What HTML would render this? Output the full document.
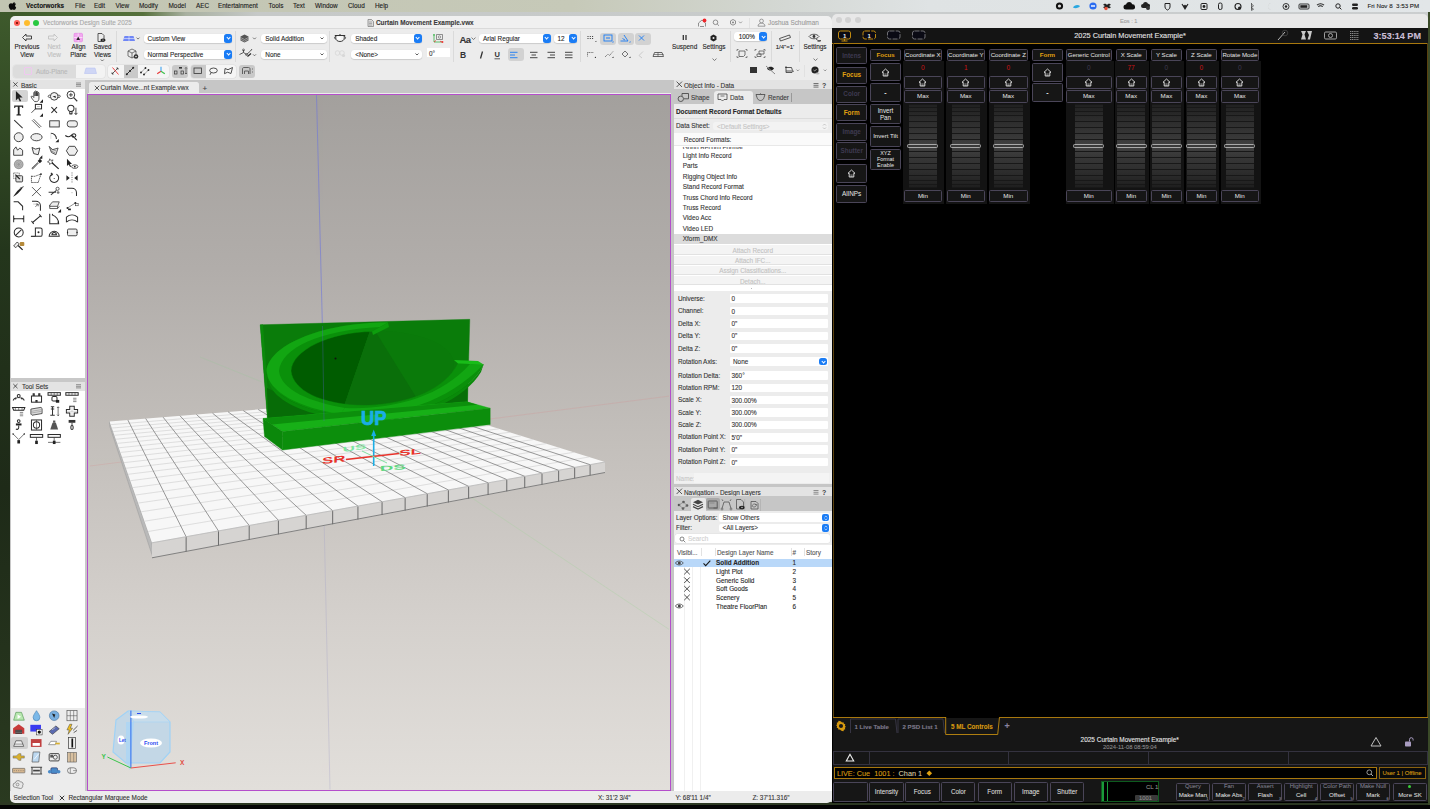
<!DOCTYPE html>
<html><head><meta charset="utf-8">
<style>
*{margin:0;padding:0;box-sizing:border-box}
html,body{width:1430px;height:809px;overflow:hidden;background:#000}
body{position:relative;font-family:"Liberation Sans",sans-serif;font-size:6.4px;color:#262626;line-height:1}
.a{position:absolute}
.t{position:absolute;white-space:nowrap;line-height:1;-webkit-text-stroke:.1px currentColor;margin-top:.8px}
svg{position:absolute;overflow:visible}
/* dropdowns */
.dd{position:absolute;background:#fff;border-radius:3px;box-shadow:0 0.5px 1px rgba(0,0,0,.25);height:9px}
.dd .t{left:4px;top:1.0px;font-size:6.4px;color:#262626}
.bb{position:absolute;right:0;top:0;width:8px;height:9px;background:#1a7cf5;border-radius:2.5px}
.bb:after{content:"";position:absolute;left:2.6px;top:2.2px;width:2.2px;height:2.2px;border-right:1px solid #fff;border-bottom:1px solid #fff;transform:rotate(45deg)}
.chev{position:absolute;width:2.4px;height:2.4px;border-right:1px solid #333;border-bottom:1px solid #333;transform:rotate(45deg)}
.sep{position:absolute;width:1px;background:#dadada}
.hl{position:absolute;background:#d2d2d2;border-radius:3px}
/* panels */
.ph{position:absolute;background:#e3e3e3}
/* eos */
.eb{position:absolute;border:1px solid #4a4558;background:#161616;border-radius:1px;color:#e6e6e6;font-size:6.2px;text-align:center}
.eb span{position:absolute;left:0;right:0;top:50%;transform:translateY(-50%)}
</style></head><body>

<!-- wallpaper -->
<div class="a" style="left:0;top:0;width:1430px;height:809px;background:linear-gradient(90deg,#3a5428 0%,#4a6a34 6%,#56703c 10%,#a8b0a0 13%,#c6c9c8 18%,#cbcecf 100%)"></div>
<div class="a" style="left:0;top:12px;width:11px;height:795px;background:linear-gradient(180deg,#3e5a2c,#24361c 30%,#1e2a18 60%,#2a3a20 100%)"></div>
<div class="a" style="left:0;top:802px;width:1430px;height:3px;background:#2c3822"></div>
<div class="a" style="left:1428px;top:12px;width:2px;height:795px;background:#3a4a28"></div>
<div class="a" style="left:0;top:805px;width:1430px;height:4px;background:#050505"></div>
<!-- menubar -->
<div class="a" style="left:0;top:0;width:1430px;height:12px;background:linear-gradient(90deg,#c2c5b2 0%,#c6c9b8 40%,#d4d8d4 55%,#dfe3e4 65%,#e2e6e8 100%)"></div>
<!-- VW window -->
<div class="a" id="vw" style="left:10px;top:25px;width:821.5px;height:770px;background:#ececec"></div>
<!-- EOS window -->
<div class="a" id="eos" style="left:832px;top:27px;width:596px;height:776px;background:#000"></div>

<div id="menu">
<svg style="left:9px;top:1.5px" width="8" height="9" viewBox="0 0 16 18"><path d="M11.5 0c.2 1.3-.4 2.6-1.1 3.4-.8.9-2 1.5-3.1 1.4-.2-1.2.4-2.5 1.1-3.3C9.2.6 10.5 0 11.5 0zM15.2 13.2c-.5 1.1-.7 1.6-1.3 2.5-.9 1.3-2.1 2.9-3.6 2.9-1.3 0-1.7-.9-3.5-.8-1.8 0-2.2.8-3.5.8C1.8 18.6.7 17.1-.2 15.8c-2.5-3.7-2.8-8.1-1.2-10.4C-.3 3.8 1.4 2.8 3 2.8c1.6 0 2.7.9 4 .9 1.3 0 2.1-.9 4-.9 1.4 0 2.9.8 4 2.1-3.5 1.9-2.9 6.9.2 8.3z" fill="#0a0a0a" transform="translate(1.5,0) scale(0.85)"/></svg>
<div class="t" style="left:26px;top:2.6px;font-weight:bold;color:#111">Vectorworks</div>
<div class="t" style="left:75px;top:2.6px;color:#1a1a1a">File</div>
<div class="t" style="left:94px;top:2.6px;color:#1a1a1a">Edit</div>
<div class="t" style="left:115.5px;top:2.6px;color:#1a1a1a">View</div>
<div class="t" style="left:139px;top:2.6px;color:#1a1a1a">Modify</div>
<div class="t" style="left:168.5px;top:2.6px;color:#1a1a1a">Model</div>
<div class="t" style="left:196px;top:2.6px;color:#1a1a1a">AEC</div>
<div class="t" style="left:218px;top:2.6px;color:#1a1a1a">Entertainment</div>
<div class="t" style="left:268.5px;top:2.6px;color:#1a1a1a">Tools</div>
<div class="t" style="left:293px;top:2.6px;color:#1a1a1a">Text</div>
<div class="t" style="left:315px;top:2.6px;color:#1a1a1a">Window</div>
<div class="t" style="left:348px;top:2.6px;color:#1a1a1a">Cloud</div>
<div class="t" style="left:375px;top:2.6px;color:#1a1a1a">Help</div>
<!-- status icons -->
<svg style="left:1055px;top:2px" width="375" height="9">
 <circle cx="4.5" cy="4" r="3.6" fill="#111"/><circle cx="4.5" cy="4" r="1.6" fill="#ddd"/>
 <path d="M18 5.5c1-2.5 5-3.5 7-1.5-1 2-5 3-7 1.5z" fill="#2aa8e0"/>
 <circle cx="38" cy="4" r="3.6" fill="#2a6cf0"/><rect x="36" y="3.3" width="4" height="1.4" fill="#fff"/>
 <path d="M50 1.5l2 1.2 2-1.2 2 1.2-2 1.3 2 1.3-2 1.2-2-1.2-2 1.2-2-1.2 2-1.3-2-1.3z" fill="#222"/><circle cx="51" cy="6.5" r="1.7" fill="#e8503a"/>
 <path d="M76 7.5h-5a2.5 2.5 0 010-5 3.2 3.2 0 016.2-.3 2.5 2.5 0 01.4 5.3z" fill="#111"/>
 <path d="M92 6h-4a2 2 0 010-4 2.6 2.6 0 015-.2 1.9 1.9 0 01.3 3.8z" fill="#222"/><circle cx="93" cy="6" r="2" fill="#333"/>
 <path d="M110 1.5h5v3.5c0 2-2.5 3-2.5 3s-2.5-1-2.5-3z" fill="none" stroke="#222" stroke-width="1"/>
 <path d="M127 2l3 5 3-5M129 3l1 2 1-2" fill="none" stroke="#222" stroke-width="1.1"/>
 <rect x="146" y="1.5" width="6" height="6" rx="1" fill="none" stroke="#222" stroke-width="1"/><circle cx="149" cy="4.5" r="1.4" fill="#222"/>
 <rect x="163.5" y="1" width="3.5" height="6.5" rx="1.5" fill="none" stroke="#222" stroke-width="1"/>
 <circle cx="183" cy="4.5" r="3" fill="none" stroke="#222" stroke-width="1.1"/><circle cx="184.5" cy="6" r="1.5" fill="#222"/>
 <path d="M196.5 2l2 1.8-2 1.8M196.5 5.6l2 1.6-2 1.2V1" fill="none" stroke="#333" stroke-width=".7"/>
 <path d="M216 1.5a3 3 0 100 6 3.2 3.2 0 01-1.5-6z" fill="#bbb"/>
 <circle cx="231" cy="4.5" r="3" fill="none" stroke="#222" stroke-width=".9"/><circle cx="231" cy="4.5" r="1.2" fill="#222"/>
 <rect x="244" y="2" width="10" height="5" rx="1" fill="none" stroke="#222" stroke-width=".9"/><rect x="245.3" y="3.2" width="7" height="2.6" fill="#222"/>
 <path d="M262 3.2a5 5 0 017 0M263.3 4.7a3 3 0 014.4 0M265.5 6.8l.1.1" stroke="#222" stroke-width="1.1" fill="none"/>
 <circle cx="283" cy="4" r="2.2" fill="none" stroke="#222" stroke-width="1"/><path d="M284.6 5.6l1.8 1.8" stroke="#222" stroke-width="1"/>
 <rect x="297" y="1.5" width="6" height="2.5" rx="1.2" fill="#222"/><rect x="297" y="5" width="6" height="2.5" rx="1.2" fill="#222"/>
</svg>
<div class="t" style="left:1367.5px;top:2.6px;color:#1a1a1a;font-size:6.2px">Fri Nov 8&nbsp;&nbsp;3:53 PM</div>
</div>

<div id="vwc">
<!-- title bar -->
<div class="a" style="left:10px;top:16px;width:821.5px;height:13px;background:#f0f0f0;border-radius:5px 5px 0 0;border-bottom:1px solid #dadada"></div>
<div class="a" style="left:14px;top:19.8px;width:6px;height:6px;border-radius:50%;background:#fe5f57"></div>
<div class="a" style="left:16.2px;top:22px;width:1.6px;height:1.6px;background:#8a1a10"></div>
<div class="a" style="left:23.6px;top:19.8px;width:6px;height:6px;border-radius:50%;background:#febc2e"></div>
<div class="a" style="left:33px;top:19.8px;width:6px;height:6px;border-radius:50%;background:#28c840"></div>
<div class="t" style="left:43px;top:19.6px;color:#a8a8a8">Vectorworks Design Suite 2025</div>
<svg style="left:367px;top:18.5px" width="7" height="8"><path d="M1 .5h3.5l2 2v5h-5.5z" fill="#ddd" stroke="#777" stroke-width=".7"/><path d="M2 3h3M2 4.5h3M2 6h3" stroke="#777" stroke-width=".5"/></svg>
<div class="t" style="left:376px;top:19.6px;color:#3a3a3a;font-weight:bold">Curtain Movement Example.vwx</div>
<svg style="left:697px;top:18px" width="60" height="10">
 <path d="M1.5 8.5V5l3.5-3 3.5 3v3.5" fill="none" stroke="#777" stroke-width=".8"/><path d="M3 8.5h4" stroke="#777" stroke-width=".8"/>
 <circle cx="7.5" cy="2.5" r="1.9" fill="#f0262a"/>
 <circle cx="18.5" cy="4.3" r="2.3" fill="none" stroke="#777" stroke-width=".8"/><path d="M20.2 6l1.8 1.8" stroke="#777" stroke-width=".8"/>
 <path d="M36 1.5l2.5 1.4v2.9L36 7.2l-2.5-1.4V2.9z" fill="none" stroke="#777" stroke-width=".8"/><circle cx="36" cy="4.4" r=".9" fill="#777"/>
 <path d="M42 3.6l1.5 1.5 1.5-1.5" fill="none" stroke="#777" stroke-width=".7"/>
 <path d="M52.5 0v10" stroke="#dedede" stroke-width=".8"/>
</svg>
<svg style="left:757px;top:18px" width="9" height="9"><circle cx="4.5" cy="3" r="1.9" fill="none" stroke="#888" stroke-width=".8"/><path d="M1 8.2c0-2 1.5-3 3.5-3s3.5 1 3.5 3z" fill="none" stroke="#888" stroke-width=".8"/></svg>
<div class="t" style="left:768px;top:19.6px;color:#9a9a9a">Joshua Schulman</div>

<!-- toolbar -->
<!-- Prev/Next/Align/Saved -->
<svg style="left:21px;top:33px" width="95" height="30">
 <path d="M1.5 4.5l3.5-3.5v2h5.5v3H5v2z" fill="none" stroke="#333" stroke-width=".9" stroke-linejoin="round"/>
 <path d="M36.5 4.5l-3.5-3.5v2h-5.5v3H33v2z" fill="none" stroke="#c2c2c2" stroke-width=".9" stroke-linejoin="round"/>
 <rect x="53" y="0.3" width="8.5" height="8.5" rx="1" fill="#f2a8f0" stroke="#e070e0" stroke-width=".5"/><path d="M53 4.5h8.5M57.2 .3v8.5" stroke="#fff" stroke-width=".6"/><path d="M57.2 3.5l-1.8 3.6h3.6z" fill="#222"/>
 <path d="M77 .5h4l2 2v6h-6z" fill="none" stroke="#333" stroke-width=".8"/><ellipse cx="82" cy="7" rx="2.6" ry="1.5" fill="#222"/><circle cx="82" cy="7" r=".6" fill="#fff"/>
 <path d="M79.8 26.5l1.5 1.5 1.5-1.5" fill="none" stroke="#444" stroke-width=".7"/>
</svg>
<div class="t" style="left:14px;top:42.6px;width:26px;text-align:center;color:#222;line-height:7.5px;white-space:normal">Previous<br>View</div>
<div class="t" style="left:43px;top:42.6px;width:22px;text-align:center;color:#bdbdbd;line-height:7.5px;white-space:normal">Next<br>View</div>
<div class="t" style="left:66px;top:42.6px;width:25px;text-align:center;color:#222;line-height:7.5px;white-space:normal">Align<br>Plane</div>
<div class="t" style="left:89px;top:42.6px;width:27px;text-align:center;color:#222;line-height:7.5px;white-space:normal">Saved<br>Views</div>
<div class="sep" style="left:116px;top:31px;height:31px"></div>
<!-- Auto-plane group -->
<div class="a" style="left:13px;top:64.5px;width:92px;height:13px;border-radius:3px;background:#f3f3f3;box-shadow:0 0 0 .5px #dedede"></div>
<div class="a" style="left:13px;top:64.5px;width:63px;height:13px;border-radius:3px 0 0 3px;background:#dcdcdc"></div>
<div class="a" style="left:23.5px;top:67px;width:8px;height:8px;border:.7px solid #f0c8f0;border-radius:1px"></div>
<div class="t" style="left:36px;top:68px;color:#b8b8b8">Auto-Plane</div>
<svg style="left:84px;top:67px" width="13" height="8"><path d="M2 1h9l1.5 5.5H.5z" fill="#cfd6f5" stroke="#b0bcf0" stroke-width=".5"/></svg>
<!-- view dropdowns -->
<svg style="left:123px;top:34px" width="18" height="26">
 <path d="M1.5 2h9l1.5 5h-12z" fill="#6f86f5"/><path d="M1 4.5h10.5M6 2v5" stroke="#fff" stroke-width=".5"/>
 <path d="M13.5 3.6l1.5 1.5 1.5-1.5" fill="none" stroke="#444" stroke-width=".7"/>
 <path d="M5 17l4-2 4 2v5l-4 2-4-2zM5 17l4 2 4-2M9 19v5" fill="none" stroke="#444" stroke-width=".7"/><circle cx="13" cy="22.5" r="2.3" fill="#333"/><circle cx="13" cy="22.5" r=".8" fill="#eee"/>
</svg>
<div class="dd" style="left:143.6px;top:33.8px;width:88.4px"><div class="t">Custom View</div><div class="bb"></div></div>
<div class="dd" style="left:143.6px;top:50px;width:88.4px"><div class="t">Normal Perspective</div><div class="bb"></div></div>
<div class="sep" style="left:234.5px;top:31px;height:31px"></div>
<svg style="left:238px;top:33px" width="22" height="28">
 <path d="M6.5 1.5l4 2v4l-4 2-4-2v-4z" fill="#555"/><path d="M2.5 4.5l4 2 4-2M2.5 6.2l4 2 4-2" stroke="#ddd" stroke-width=".5" fill="none"/>
 <path d="M15 4.6l1.5 1.5 1.5-1.5" fill="none" stroke="#444" stroke-width=".7"/>
 <path d="M1.5 21.5l4-2 3 2 4-3.5M5.5 19.5v-2.5M12.5 18l1.5-2" stroke="#333" stroke-width=".8" fill="none"/><circle cx="5.5" cy="17" r="1" fill="none" stroke="#333" stroke-width=".6"/><circle cx="8.5" cy="21.5" r="1" fill="none" stroke="#333" stroke-width=".6"/><path d="M9.5 23.5l3.5-3" stroke="#222" stroke-width="1.1"/>
 <path d="M15 21.3l1.5 1.5 1.5-1.5" fill="none" stroke="#444" stroke-width=".7"/>
</svg>
<div class="dd" style="left:261.3px;top:33.8px;width:65.7px"><div class="t">Solid Addition</div><svg style="right:3px;top:3.3px" width="4" height="3"><path d="M.5.5l1.5 1.5 1.5-1.5" fill="none" stroke="#333" stroke-width=".8"/></svg></div>
<div class="dd" style="left:261.3px;top:50px;width:65.7px"><div class="t">None</div><svg style="right:3px;top:3.3px" width="4" height="3"><path d="M.5.5l1.5 1.5 1.5-1.5" fill="none" stroke="#333" stroke-width=".8"/></svg></div>
<div class="sep" style="left:329px;top:31px;height:31px"></div>
<svg style="left:333px;top:33px" width="16" height="26">
 <path d="M3 2.5h8l.3 2.3c0 2.3-1.8 3.7-4.3 3.7S2.7 7.1 2.7 4.8z" fill="#f4f4f4" stroke="#333" stroke-width=".95"/><path d="M1.8 2.5h10.4" stroke="#333" stroke-width="1"/><path d="M11.3 3.5c1.6 0 1.8 2.2.2 2.6M2.7 3.5C1.2 3.6 1 5.6 2.6 6" fill="none" stroke="#333" stroke-width=".8"/><path d="M6 2.3a1 1 0 012 0" fill="#333"/><ellipse cx="6" cy="5.3" rx="1.8" ry="1.2" fill="#fff"/>
 <circle cx="4.5" cy="20" r="2.3" fill="none" stroke="#d4d4d4" stroke-width=".7"/><circle cx="9" cy="20" r="2.3" fill="none" stroke="#d4d4d4" stroke-width=".7"/><circle cx="10.5" cy="22.5" r="1.6" fill="#d8d8d8"/>
</svg>
<div class="dd" style="left:351.2px;top:33.8px;width:70.5px"><div class="t">Shaded</div><div class="bb"></div></div>
<div class="dd" style="left:351.2px;top:50px;width:70.5px"><div class="t">&lt;None&gt;</div><svg style="right:3px;top:3.3px" width="4" height="3"><path d="M.5.5l1.5 1.5 1.5-1.5" fill="none" stroke="#333" stroke-width=".8"/></svg></div>
<svg style="left:432px;top:33px" width="14" height="11"><path d="M2 2v7h8" fill="none" stroke="#39b54a" stroke-width=".8"/><path d="M2 9l2-1.5M10 9l-2-.8" stroke="#e33" stroke-width=".8"/><path d="M4.5 1.5h6v5h-6z" fill="none" stroke="#666" stroke-width=".7"/><circle cx="7.5" cy="4" r="1.2" fill="none" stroke="#666" stroke-width=".6"/><circle cx="2" cy="1.8" r=".9" fill="#39b54a"/><circle cx="10.5" cy="9" r=".9" fill="#e33"/></svg>
<div class="a" style="left:427px;top:48px;width:23px;height:9px;background:#fff"></div>
<div class="t" style="left:429px;top:50px;color:#333">0°</div>
<div class="sep" style="left:453px;top:31px;height:31px"></div>
<!-- text -->
<div class="t" style="left:459.5px;top:34.5px;font-size:9.5px;color:#333;font-weight:bold;letter-spacing:-.5px">Aa</div>
<svg style="left:471.0px;top:37.1px" width="5" height="3.5"><path d="M.5.6l2 1.9 2-1.9" fill="none" stroke="#555" stroke-width=".75"/></svg>
<div class="dd" style="left:479px;top:33.8px;width:71.7px"><div class="t">Arial Regular</div><div class="bb"></div></div>
<div class="dd" style="left:553.5px;top:33.8px;width:23.5px"><div class="t">12</div><div class="bb"></div></div>
<div class="hl" style="left:508px;top:48.4px;width:16.4px;height:12.8px"></div>
<svg style="left:458px;top:50px" width="120" height="10">
 <text x="2" y="8" font-family="Liberation Sans" font-weight="bold" font-size="8.5" fill="#333">B</text>
 <path d="M24.5 1.5l-2 7" stroke="#333" stroke-width="1.3"/>
 <text x="36.5" y="7" font-family="Liberation Sans" font-weight="bold" font-size="7.5" fill="#333">U</text><path d="M36.5 8.8h5.5" stroke="#333" stroke-width=".8"/>
 <path d="M52 2.3h7.5M52 5h5M52 7.7h7.5" stroke="#1a7cf5" stroke-width=".9"/>
 <path d="M72 2.3h7.5M73.5 5h4.5M72 7.7h7.5" stroke="#333" stroke-width=".9"/>
 <path d="M89.5 2.3h7.5M92 5h5M89.5 7.7h7.5" stroke="#333" stroke-width=".9"/>
 <path d="M107 2.3h7.5M107 5h7.5M107 7.7h7.5" stroke="#333" stroke-width=".9"/>
</svg>
<div class="sep" style="left:579.8px;top:31px;height:31px"></div>
<!-- snaps -->
<div class="hl" style="left:600px;top:32.5px;width:15.8px;height:12.5px"></div>
<div class="hl" style="left:618px;top:32.5px;width:15.5px;height:12.5px"></div>
<div class="hl" style="left:635.4px;top:32.5px;width:15.6px;height:12.5px"></div>
<svg style="left:585px;top:33px" width="80" height="30">
 <path d="M2.5 3.5h1M4.8 3.5h1M7.1 3.5h1M2.5 5.5h1M4.8 5.5h1M7.1 5.5h1" stroke="#333" stroke-width="1"/><path d="M10 9l1.3-1.3v1.3z" fill="#222"/>
 <rect x="19" y="2" width="8" height="6" fill="none" stroke="#1a7cf5" stroke-width=".9"/><rect x="21" y="4" width="4" height="2" fill="#1a7cf5" opacity=".5"/><path d="M27 9.5l1.5-1.5v1.5z" fill="#1a7cf5"/>
 <path d="M35.5 8h7.5l-4-6M37.5 5.5l2.5 1.5" fill="none" stroke="#1a7cf5" stroke-width=".9"/><path d="M44 9.5l1.5-1.5v1.5z" fill="#1a7cf5"/>
 <path d="M54 2.5l5 5M59 2.5l-5 5" stroke="#1a7cf5" stroke-width=".9"/>
 <path d="M2.5 19.5h6M2.5 19.5v4" stroke="#555" stroke-width=".8" stroke-dasharray="1 .6"/><path d="M9.5 25l1.5-1.5v1.5z" fill="#222"/>
 <path d="M20 24l3-3 1.5 1.5 3.5-4" stroke="#555" stroke-width=".8" fill="none" stroke-dasharray="1.2 .6"/><path d="M27 25l1.5-1.5v1.5z" fill="#222"/>
 <path d="M37 21l3-3 3 3-3 3z" fill="none" stroke="#555" stroke-width=".8"/><path d="M44 25l1.5-1.5v1.5z" fill="#222"/>
 <path d="M54 22.5l4-4M54 22.5l3 2.5" stroke="#bbb" stroke-width=".7" fill="none"/>
 <path d="M69.5 19.5h7.5l1.5 4h-10.5z" fill="none" stroke="#444" stroke-width=".8"/><path d="M68.6 21.5h10M73 19.5v4" stroke="#444" stroke-width=".6"/>
</svg>
<svg style="left:680px;top:34px" width="40" height="8">
 <path d="M3.3 1v5M6 1v5" stroke="#333" stroke-width="1.3"/>
 <path d="M33.5 .5l3 1.8v3.4l-3 1.8-3-1.8V2.3z" fill="#222"/><circle cx="33.5" cy="4" r="1" fill="#eee"/>
</svg>
<div class="t" style="left:672px;top:43.6px;width:25px;text-align:center;color:#222">Suspend</div>
<div class="t" style="left:700px;top:43.6px;width:28px;text-align:center;color:#222">Settings</div>
<svg style="left:711.5px;top:58.0px" width="5" height="3.5"><path d="M.5.6l2 1.9 2-1.9" fill="none" stroke="#555" stroke-width=".75"/></svg>
<div class="sep" style="left:730.4px;top:31px;height:31px"></div>
<div class="dd" style="left:733.7px;top:32.4px;width:33.3px"><div class="t" style="left:5px">100%</div><div class="bb"></div></div>
<svg style="left:736px;top:48px" width="32" height="11">
 <path d="M1 1.5h1.5M1 1.5V3M11 1.5H9.5M11 1.5V3M1 9.5h1.5M1 9.5V8M11 9.5H9.5M11 9.5V8" stroke="#555" stroke-width=".7"/><path d="M3 3h6v4l-1.5 1.5H3z" fill="none" stroke="#555" stroke-width=".8"/>
 <path d="M19 1.5h1.5M19 1.5V3M29 1.5h-1.5M29 1.5V3M19 9.5h1.5M19 9.5V8M29 9.5h-1.5M29 9.5V8" stroke="#555" stroke-width=".7"/><path d="M23 3h5v3h-5zM21 6h4v2.5h-4z" fill="none" stroke="#555" stroke-width=".8"/>
</svg>
<div class="sep" style="left:770.7px;top:31px;height:31px"></div>
<svg style="left:778px;top:34px" width="14" height="8"><path d="M1.5 4.5l10-3.5 1 2.5-10 3.5z" fill="none" stroke="#444" stroke-width=".9"/></svg>
<div class="t" style="left:772px;top:43.6px;width:26px;text-align:center;color:#222;font-size:6px">1/4"=1'</div>
<div class="sep" style="left:799.2px;top:31px;height:31px"></div>
<svg style="left:808px;top:33px" width="14" height="9"><path d="M1 3.5c2-3 8-3 10 0-2 3-8 3-10 0z" fill="none" stroke="#333" stroke-width=".8"/><circle cx="6" cy="3.5" r="1.4" fill="#333"/><path d="M8 6l2 1.5h3" stroke="#333" stroke-width=".8" fill="none"/><path d="M9.5 8.5h3" stroke="#333" stroke-width=".6"/></svg>
<div class="t" style="left:801px;top:43.6px;width:28px;text-align:center;color:#222">Settings</div>
<svg style="left:812.8px;top:58.0px" width="5" height="3.5"><path d="M.5.6l2 1.9 2-1.9" fill="none" stroke="#555" stroke-width=".75"/></svg>
<svg style="left:745px;top:65px" width="86" height="12">
 <rect x="5" y="2" width="7" height="6" fill="#333"/>
 <path d="M22 3.5c2.5-2.5 5.5-2 7 0-1.5 2.5-5 3-7 0z" fill="#222"/><path d="M21.5 1.5l8 7" stroke="#eee" stroke-width=".8"/><path d="M21 1l9 8" stroke="#222" stroke-width=".5"/>
 <path d="M41 2.5v5h6l1.5-1.5h-7.5M41 2.5h5.5l1 3" fill="none" stroke="#333" stroke-width=".8"/><path d="M40 2.5h2M41 1v2" stroke="#333" stroke-width=".7"/>
 <path d="M51.5 4.6l1.3 1.3 1.3-1.3" fill="none" stroke="#555" stroke-width=".6"/>
 <path d="M59.5 0v12" stroke="#dedede" stroke-width=".8"/>
 <circle cx="70" cy="5" r="3.6" fill="#222"/><path d="M68.5 5l1.2 1 2-2" stroke="#eee" stroke-width=".6" fill="none"/><ellipse cx="72.5" cy="8.6" rx="2" ry="1" fill="#bbb"/>
 <path d="M78.8 4.6l1.3 1.3 1.3-1.3" fill="none" stroke="#555" stroke-width=".6"/>
</svg>
<!-- bottom-row snapping groups -->
<div class="a" style="left:107.8px;top:64.6px;width:61.5px;height:13px;background:#f5f5f5;border-radius:3px;box-shadow:0 0 0 .5px #dadada"></div>
<div class="a" style="left:123.5px;top:64.6px;width:14.5px;height:13px;background:#c9c9c9"></div>
<div class="a" style="left:172px;top:64.6px;width:15.8px;height:13px;background:#c9c9c9;border-radius:3px"></div>
<div class="a" style="left:190.6px;top:64.6px;width:45.8px;height:13px;background:#f5f5f5;border-radius:3px;box-shadow:0 0 0 .5px #dadada"></div>
<div class="a" style="left:190.6px;top:64.6px;width:15.4px;height:13px;background:#c9c9c9;border-radius:3px 0 0 3px"></div>
<div class="a" style="left:239.3px;top:64.6px;width:15.7px;height:13px;background:#c9c9c9;border-radius:3px"></div>
<svg style="left:108px;top:65px" width="150" height="12">
 <path d="M4 9l6-6M4 9h1.6M4 9V7.4M10 3H8.4M10 3v1.6" stroke="#333" stroke-width=".8" fill="none"/><path d="M4.5 2.5l6 7" stroke="#e33" stroke-width=".9"/>
 <path d="M18.5 9.5l7-7" stroke="#222" stroke-width=".9"/><circle cx="18.8" cy="9.2" r="1" fill="#222"/><circle cx="22" cy="6" r="1" fill="#222"/><circle cx="25.2" cy="2.8" r="1" fill="#222"/>
 <path d="M32.5 8l5-5M35.5 10l5-5" stroke="#333" stroke-width=".8" stroke-dasharray="1.2 .7" fill="none"/><circle cx="33" cy="7.5" r=".9" fill="#222"/><circle cx="37.5" cy="3" r=".9" fill="#222"/><circle cx="36" cy="9.5" r=".9" fill="#222"/><circle cx="40.5" cy="5" r=".9" fill="#222"/>
 <path d="M53 6.3V1.8" stroke="#4aa8f0" stroke-width="1.2"/><path d="M53 6.3l-3.8 2.4" stroke="#e83a3a" stroke-width="1.2"/><path d="M53 6.3l3.8 2.4" stroke="#39c04a" stroke-width="1.2"/>
 <rect x="66.5" y="6" width="2.5" height="3" fill="none" stroke="#333" stroke-width=".7"/><rect x="71" y="2" width="3" height="1.6" fill="#333"/><rect x="73" y="6" width="2.5" height="3" fill="none" stroke="#333" stroke-width=".7"/><path d="M78 2.5v6.5M77 3.5l1-1 1 1M77 8l1 1 1-1" stroke="#333" stroke-width=".6" fill="none"/>
 <rect x="86" y="3" width="7.5" height="5.5" fill="none" stroke="#333" stroke-width=".8"/>
 <ellipse cx="105.5" cy="5.5" rx="3.8" ry="2.5" fill="none" stroke="#333" stroke-width=".85"/><path d="M103 7.8l-1 2" stroke="#333" stroke-width=".85"/>
 <path d="M117 3.5l3 1.2 4.5-2.2-1.5 6-3.5-1.3-3 1.5z" fill="none" stroke="#333" stroke-width=".85"/>
 <path d="M134.5 9V4c0-1 .5-1.5 1.5-1.5h4.5c1 0 1.5.5 1.5 1.5v5M136.5 9V6h4v3" fill="none" stroke="#555" stroke-width=".9"/><path d="M144.5 3.5v1M144.5 6.5v1" stroke="#555" stroke-width=".8"/>
</svg>
</div>

<div id="tools">
<div class="a" style="left:10px;top:80px;width:78px;height:711px;background:#c8c8c8"></div>
<div class="ph" style="left:10.5px;top:80.4px;width:74.1px;height:8.6px"></div>
<div class="a" style="left:10.5px;top:89px;width:74.1px;height:289.4px;background:#fff"></div>
<div class="ph" style="left:10.5px;top:382px;width:74.1px;height:8.8px"></div>
<div class="a" style="left:10.5px;top:390.8px;width:74.1px;height:316.8px;background:#fff"></div>
<div class="a" style="left:10.5px;top:707.6px;width:74.1px;height:83.4px;background:#ececec"></div>
<div class="a" style="left:12px;top:90px;width:15.6px;height:12.3px;background:#d4d4d4;border-radius:2px"></div>
<div class="a" style="left:11px;top:736.8px;width:16.6px;height:12px;background:#d0d0d0;border-radius:2px"></div>
<svg style="left:0;top:0" width="100" height="800">
<path d="M13.3 82.3l4.2 4.2M17.5 82.3l-4.2 4.2" stroke="#333" stroke-width=".8"/>
<path d="M76 83h5M76 84.6h5M76 86.2h5" stroke="#777" stroke-width=".8"/>
<path d="M13.3 384l4.2 4.2M17.5 384l-4.2 4.2" stroke="#333" stroke-width=".8"/>
<path d="M76 384.7h5M76 386.3h5M76 387.9h5" stroke="#777" stroke-width=".8"/>
<g transform="translate(18.70,96.00) scale(1.12) translate(-6,-6)"><path d="M3.5 1.5v8.5l2-2 1.5 3 1.2-.6-1.5-3h2.8z" fill="#222"/></g>
<g transform="translate(36.50,96.00) scale(1.12) translate(-6,-6)"><path d="M4.3 11C3.3 10 1.8 8.2 1.3 7c-.3-.8.6-1.3 1.3-.6l1 1V3c0-.8 1.1-.8 1.1 0v3V2c0-.8 1.2-.8 1.2 0v4V2.5c0-.8 1.2-.8 1.2 0V6V3.4c0-.7 1.1-.7 1.1 0v4.4c0 2-.8 3.2-2.3 3.2z" fill="#f6f6f6" stroke="#333" stroke-width=".75"/><path d="M8.799999999999999 12l3-3v3z" fill="#222"/></g>
<g transform="translate(54.20,96.00) scale(1.12) translate(-6,-6)"><circle cx="6" cy="6.3" r="3.4" fill="#f4f4f4" stroke="#333" stroke-width=".8"/><path d="M2.6 5.3C1.3 5 .6 5.6.6 6.3s.8 1.2 2 1.1M9.4 5.3c1.3-.3 2 .3 2 1s-.8 1.2-2 1.1" fill="none" stroke="#333" stroke-width=".75"/><path d="M4.5 6.5l3 1.3-.3-2z" fill="#222"/></g>
<g transform="translate(72.00,96.00) scale(1.12) translate(-6,-6)"><circle cx="5" cy="5" r="3.4" fill="none" stroke="#333" stroke-width=".85"/><path d="M3.2 5h3.6M5 3.2v3.6" stroke="#333" stroke-width=".8"/><path d="M7.5 7.5l3.2 3.2" stroke="#333" stroke-width="1"/></g>
<g transform="translate(18.70,110.00) scale(1.12) translate(-6,-6)"><path d="M2 2h8v2.2h-.8l-.3-1.2H6.8v6.8l1.2.3V11H4v-.9l1.2-.3V3H3.1l-.3 1.2H2z" fill="#222"/></g>
<g transform="translate(36.50,110.00) scale(1.12) translate(-6,-6)"><rect x="5" y="1" width="5.5" height="4" stroke="#2a2a2a" stroke-width=".9" fill="none"/><path d="M6.5 3h2.5" stroke="#888" stroke-width=".5"/><path d="M5 5l-3.5 3.5" stroke="#222" stroke-width=".7"/><path d="M8.799999999999999 12l3-3v3z" fill="#222"/></g>
<g transform="translate(54.20,110.00) scale(1.12) translate(-6,-6)"><path d="M3.5 3.5l5 5M8.5 3.5l-5 5" stroke="#2a2a2a" stroke-width=".9" fill="none"/></g>
<g transform="translate(72.00,110.00) scale(1.12) translate(-6,-6)"><circle cx="5" cy="4.5" r="2.8" stroke="#2a2a2a" stroke-width=".9" fill="none"/><path d="M4 7.3v2h2v-2M4 9.5h2" stroke="#2a2a2a" stroke-width=".9" fill="none"/><path d="M9.5 4v6M8.2 8.6l1.3 1.5 1.3-1.5" stroke="#333" stroke-width=".8" fill="none"/></g>
<g transform="translate(18.70,123.60) scale(1.12) translate(-6,-6)"><path d="M2 3l7.5 7" stroke="#333" stroke-width=".9"/></g>
<g transform="translate(36.50,123.60) scale(1.12) translate(-6,-6)"><path d="M2 3l7 7M3.3 2l7 7" stroke="#333" stroke-width=".7"/></g>
<g transform="translate(54.20,123.60) scale(1.12) translate(-6,-6)"><rect x="2" y="3.5" width="8.5" height="5.5" fill="#eee" stroke="#333" stroke-width=".8"/></g>
<g transform="translate(72.00,123.60) scale(1.12) translate(-6,-6)"><rect x="1.8" y="3.5" width="9" height="5.5" rx="2.2" fill="#eee" stroke="#333" stroke-width=".8"/></g>
<g transform="translate(18.70,137.20) scale(1.12) translate(-6,-6)"><circle cx="6" cy="6" r="4" fill="#eee" stroke="#333" stroke-width=".8"/></g>
<g transform="translate(36.50,137.20) scale(1.12) translate(-6,-6)"><ellipse cx="6" cy="6" rx="5" ry="3.2" fill="#eee" stroke="#333" stroke-width=".8"/></g>
<g transform="translate(54.20,137.20) scale(1.12) translate(-6,-6)"><path d="M3 2.5a5 5 0 015 5" stroke="#2a2a2a" stroke-width=".9" fill="none"/><path d="M3 7.5v-5" stroke="#ccc" stroke-width=".5"/><path d="M7.1 10.5l3-3v3z" fill="#222"/></g>
<g transform="translate(72.00,137.20) scale(1.12) translate(-6,-6)"><path d="M0 4.5c2 1.5 3.5 1.5 5 0 1.5-1.5 3-2 4-1s0 3-2 2.5-1-2.5.5-.5 2.5 3 3 3" stroke="#2a2a2a" stroke-width=".9" fill="none"/></g>
<g transform="translate(18.70,150.80) scale(1.12) translate(-6,-6)"><path d="M1.5 10V5l2-2.5 1.5 3 2-2 2.5 2v4.5z" fill="#eee" stroke="#333" stroke-width=".8"/></g>
<g transform="translate(36.50,150.80) scale(1.12) translate(-6,-6)"><path d="M2 3l3 1.5 4-1-1.5 6-4-1z" fill="#eee" stroke="#333" stroke-width=".8"/><path d="M8.2 13l3-3v3z" fill="#222"/></g>
<g transform="translate(54.20,150.80) scale(1.12) translate(-6,-6)"><path d="M1.5 2l3 3 5-1.5-2 6-4-2z" fill="#ddd" stroke="#333" stroke-width=".7"/><path d="M2.5 4l5 2M3 6l4 2" stroke="#333" stroke-width=".4"/></g>
<g transform="translate(72.00,150.80) scale(1.12) translate(-6,-6)"><path d="M3.5 2h5l2.5 4-2.5 4h-5L1 6z" fill="#eee" stroke="#333" stroke-width=".8"/></g>
<g transform="translate(18.70,164.40) scale(1.12) translate(-6,-6)"><circle cx="6" cy="6" r="4.3" fill="#999"/><circle cx="6" cy="6" r="3" fill="none" stroke="#ccc" stroke-width=".5"/><circle cx="6" cy="6" r="1.7" fill="none" stroke="#ccc" stroke-width=".5"/></g>
<g transform="translate(36.50,164.40) scale(1.12) translate(-6,-6)"><path d="M2 10l5.5-5.5" stroke="#333" stroke-width="1.3"/><path d="M7 3l2-2 2 2-2 2z" fill="#222"/><path d="M2 10l5.5-5.5" stroke="#fff" stroke-width=".4"/></g>
<g transform="translate(54.20,164.40) scale(1.12) translate(-6,-6)"><path d="M2 1l1 1.5L5 2l-1 1.6 1 1.5-1.8-.3L2 6.2 1.7 4.4 0 3.7 1.6 2.8z" fill="none" stroke="#333" stroke-width=".6"/><path d="M4 4.5l6 5.5" stroke="#222" stroke-width="1.1"/></g>
<g transform="translate(72.00,164.40) scale(1.12) translate(-6,-6)"><path d="M1.5 1v6.5l1.5-1.5 1.3 2.3.9-.5-1.2-2.2h2z" fill="#222"/><ellipse cx="8.5" cy="8" rx="2.8" ry="1.6" fill="none" stroke="#333" stroke-width=".7"/><circle cx="8.5" cy="8" r=".8" fill="#222"/></g>
<g transform="translate(18.70,178.00) scale(1.12) translate(-6,-6)"><path d="M1.5 1.5h5v5h-5z" fill="none" stroke="#333" stroke-width=".6" stroke-dasharray="1 .6"/><rect x="3.5" y="4" width="6" height="5.5" rx=".8" fill="#ddd" stroke="#333" stroke-width=".8"/><path d="M3 3l4 4" stroke="#222" stroke-width="1.2"/></g>
<g transform="translate(36.50,178.00) scale(1.12) translate(-6,-6)"><path d="M1.5 4v6M1.5 10h6M7.5 10l2.5-7.5-5.5 2H1.5" fill="none" stroke="#333" stroke-width=".7" stroke-dasharray="1.2 .5"/><circle cx="10" cy="2.5" r=".8" fill="#222"/></g>
<g transform="translate(54.20,178.00) scale(1.12) translate(-6,-6)"><path d="M4 2.5a4 4 0 104 0" stroke="#2a2a2a" stroke-width=".9" fill="none"/><path d="M3 1.5l1.5 1-1 1.5" stroke="#2a2a2a" stroke-width=".9" fill="none"/><circle cx="6" cy="6.5" r=".5" fill="#222"/></g>
<g transform="translate(72.00,178.00) scale(1.12) translate(-6,-6)"><path d="M1 3.5l3 2.5-3 2.5zM11 3.5l-3 2.5 3 2.5z" fill="#222"/><path d="M6 1v10" stroke="#555" stroke-width=".7" stroke-dasharray="1 1"/></g>
<g transform="translate(18.70,191.60) scale(1.12) translate(-6,-6)"><path d="M1 10.5c3-1 6-4 9-8.5-3 1.5-5 3-6.5 5z" fill="#222"/><path d="M7 3l3.5-1.5" stroke="#222" stroke-width=".6"/></g>
<g transform="translate(36.50,191.60) scale(1.12) translate(-6,-6)"><path d="M2 2l8 8M10 2l-8 8" stroke="#333" stroke-width=".7"/></g>
<g transform="translate(54.20,191.60) scale(1.12) translate(-6,-6)"><path d="M1 6.5h6.5M3 9l5-4" stroke="#333" stroke-width=".9"/><circle cx="9" cy="3.5" r="1.4" fill="none" stroke="#333" stroke-width=".7"/><circle cx="9.5" cy="6.8" r="1.2" fill="#777"/></g>
<g transform="translate(72.00,191.60) scale(1.12) translate(-6,-6)"><path d="M1.5 3h4.5a4 4 0 014 4v3" stroke="#2a2a2a" stroke-width=".9" fill="none"/><circle cx="6" cy="7" r=".4" fill="#555"/></g>
<g transform="translate(18.70,205.20) scale(1.12) translate(-6,-6)"><path d="M1.5 3h4l4 4v3.5" stroke="#2a2a2a" stroke-width=".9" fill="none"/></g>
<g transform="translate(36.50,205.20) scale(1.12) translate(-6,-6)"><path d="M2 2.5h3.5a4 4 0 014 4v4.5" stroke="#2a2a2a" stroke-width=".9" fill="none"/><path d="M3 5l4 0" stroke="#ccc" stroke-width=".8"/><path d="M5 7.5l2.5-2.5M5.5 5h2v2" stroke="#333" stroke-width=".6" fill="none"/></g>
<g transform="translate(54.20,205.20) scale(1.12) translate(-6,-6)"><path d="M2 6l2.5-3h6L9 7H2z" fill="#eee" stroke="#333" stroke-width=".7"/><path d="M2 6v3h7V7M9 9l1.5-2" fill="none" stroke="#333" stroke-width=".7"/><path d="M9.1 12.5l3-3v3z" fill="#222"/></g>
<g transform="translate(72.00,205.20) scale(1.12) translate(-6,-6)"><path d="M2 8.5l7-4.5" stroke="#333" stroke-width=".5"/><circle cx="2" cy="8.5" r=".9" fill="#222"/><circle cx="9" cy="4" r=".9" fill="#222"/><rect x="9" y="4.5" width="2.5" height="2" fill="none" stroke="#333" stroke-width=".5"/><rect x="2.5" y="9" width="2.5" height="1.5" fill="#222"/></g>
<g transform="translate(18.70,218.80) scale(1.12) translate(-6,-6)"><path d="M1.5 3v6M10.5 3v6M1.5 6h9" stroke="#2a2a2a" stroke-width=".9" fill="none"/><circle cx="2.3" cy="6" r=".5" fill="#222"/><circle cx="9.7" cy="6" r=".5" fill="#222"/></g>
<g transform="translate(36.50,218.80) scale(1.12) translate(-6,-6)"><path d="M1.5 8l2 2.5M8.5 2l2 2.5M2.5 9.3l7-6" stroke="#2a2a2a" stroke-width=".9" fill="none"/></g>
<g transform="translate(54.20,218.80) scale(1.12) translate(-6,-6)"><path d="M2 1.5v9h8a8 8 0 00-6-8" stroke="#2a2a2a" stroke-width=".9" fill="none"/><circle cx="4.5" cy="2" r=".6" fill="#222"/><circle cx="9.5" cy="9" r=".6" fill="#222"/></g>
<g transform="translate(72.00,218.80) scale(1.12) translate(-6,-6)"><path d="M1 4.5c3-2.5 7-2.5 10 0M1 9c3-2.5 7-2.5 10 0M1 4.5v4.5M11 4.5V9" stroke="#2a2a2a" stroke-width=".9" fill="none"/></g>
<g transform="translate(18.70,232.40) scale(1.12) translate(-6,-6)"><circle cx="6" cy="6" r="4" stroke="#2a2a2a" stroke-width=".9" fill="none"/><path d="M3.5 8.5l5-5" stroke="#2a2a2a" stroke-width=".9" fill="none"/></g>
<g transform="translate(36.50,232.40) scale(1.12) translate(-6,-6)"><path d="M5 2h4.5c1 0 1.5.5 1.5 1.5v4.5c0 1-.5 1.5-1.5 1.5H5z" stroke="#2a2a2a" stroke-width=".9" fill="none"/><circle cx="7.8" cy="5.8" r=".9" fill="#222"/><path d="M1 9.5h4" stroke="#222" stroke-width="1"/></g>
<g transform="translate(54.20,232.40) scale(1.12) translate(-6,-6)"><path d="M1.5 9.5a4.5 4.5 0 019 0z" stroke="#2a2a2a" stroke-width=".9" fill="none"/><path d="M4 8a2 2 0 014 0z" stroke="#2a2a2a" stroke-width=".9" fill="none"/></g>
<g transform="translate(72.00,232.40) scale(1.12) translate(-6,-6)"><rect x="2" y="3" width="8.5" height="6" rx="1" fill="#eee" stroke="#333" stroke-width=".8"/><circle cx="2" cy="6" r=".6" fill="#222"/><circle cx="10.5" cy="6" r=".6" fill="#222"/></g>
<g transform="translate(18.70,246.00) scale(1.12) translate(-6,-6)"><path d="M1.5 6l3-3.5 2 1.5-3 3.5z" fill="#eee" stroke="#333" stroke-width=".7"/><path d="M5.5 5.5l4 4" stroke="#222" stroke-width="1.1"/><rect x="7" y="2.5" width="4" height="3.5" rx=".8" fill="#b58a3a"/></g>
<g transform="translate(18.70,397.70) scale(1.12) translate(-6,-6)"><path d="M1 8.5c1-2 2-2.5 3-1.5M8 7c1-1 2-.5 3 1.5" stroke="#2a2a2a" stroke-width=".9" fill="none"/><circle cx="6" cy="4.5" r="1.3" stroke="#2a2a2a" stroke-width=".9" fill="none"/><path d="M3 8v-2h6v2" stroke="#333" stroke-width=".5" fill="none"/></g>
<g transform="translate(36.50,397.70) scale(1.12) translate(-6,-6)"><rect x="1.5" y="4.5" width="9" height="5.5" stroke="#2a2a2a" stroke-width=".9" fill="none"/><path d="M3 4.5V2.5h1V4.5M8 4.5V2.5h1V4.5M5.5 10V8.5h1V10" stroke="#2a2a2a" stroke-width=".9" fill="none"/></g>
<g transform="translate(54.20,397.70) scale(1.12) translate(-6,-6)"><rect x="0.5" y="1.5" width="11" height="2.3" stroke="#2a2a2a" stroke-width=".9" fill="none"/><path d="M3.3 1.5v2.3M6 1.5v2.3M8.7 1.5v2.3" stroke="#333" stroke-width=".5"/><rect x="4" y="5" width="4.5" height="4" rx="1" stroke="#2a2a2a" stroke-width=".9" fill="none"/><rect x="7.5" y="8" width="3" height="2.5" fill="#222"/></g>
<g transform="translate(72.00,397.70) scale(1.12) translate(-6,-6)"><rect x="0.5" y="1.5" width="11" height="2.3" stroke="#2a2a2a" stroke-width=".9" fill="none"/><path d="M3.3 1.5v2.3M6 1.5v2.3M8.7 1.5v2.3" stroke="#333" stroke-width=".5"/><path d="M7 6.5h3M7 8h3M7 9.5h3" stroke="#333" stroke-width=".5"/></g>
<g transform="translate(18.70,411.30) scale(1.12) translate(-6,-6)"><path d="M0.5 2.5h11l-1 2.5h-9z" stroke="#2a2a2a" stroke-width=".9" fill="none"/><path d="M3 2.5v2.5M6 2.5v2.5M9 2.5v2.5" stroke="#333" stroke-width=".5"/><path d="M7 7h3M7 8.5h3M7 10h3" stroke="#333" stroke-width=".5"/></g>
<g transform="translate(36.50,411.30) scale(1.12) translate(-6,-6)"><path d="M1 4l9-1.5 1 1v4.5l-9 1.5-1-1z" fill="#ddd" stroke="#333" stroke-width=".7"/><path d="M1.5 6l9-1.5M1.5 7.5l9-1.5" stroke="#888" stroke-width=".5"/></g>
<g transform="translate(54.20,411.30) scale(1.12) translate(-6,-6)"><path d="M3 2h3M4.5 2v7M2.5 9.5h4M3 4h3" stroke="#333" stroke-width=".9" fill="none"/><path d="M9.5 2v8M8.5 3l1-1 1 1M8.5 9l1 1 1-1" stroke="#333" stroke-width=".6" fill="none"/></g>
<g transform="translate(72.00,411.30) scale(1.12) translate(-6,-6)"><path d="M4 1.5h4v3h3v3H8v3H4v-3H1v-3h3z" stroke="#2a2a2a" stroke-width=".9" fill="none"/><path d="M6 1.5v9M1 6h10" stroke="#aaa" stroke-width=".4"/></g>
<g transform="translate(18.70,425.00) scale(1.12) translate(-6,-6)"><circle cx="6" cy="2.5" r="1.2" stroke="#2a2a2a" stroke-width=".9" fill="none"/><path d="M3.5 5.5h5" stroke="#222" stroke-width="1.8"/><path d="M6 6.5v2a1.5 1.5 0 01-2.5 1" stroke="#2a2a2a" stroke-width=".9" fill="none"/></g>
<g transform="translate(36.50,425.00) scale(1.12) translate(-6,-6)"><rect x="1.5" y="1.5" width="9" height="9" stroke="#2a2a2a" stroke-width=".9" fill="none"/><circle cx="6" cy="6" r="2.8" stroke="#2a2a2a" stroke-width=".9" fill="none"/><path d="M6 1.5v9" stroke="#333" stroke-width=".5"/></g>
<g transform="translate(54.20,425.00) scale(1.12) translate(-6,-6)"><path d="M2.5 10l2-6h3l2 6z" fill="#555"/><rect x="5" y="2" width="2" height="2" fill="#555"/></g>
<g transform="translate(72.00,425.00) scale(1.12) translate(-6,-6)"><rect x="3" y="1.5" width="6" height="2.5" fill="#333"/><path d="M6 4v2.5" stroke="#333" stroke-width=".8"/><rect x="5" y="6.5" width="2" height="3.5" rx="1" stroke="#2a2a2a" stroke-width=".9" fill="none"/></g>
<g transform="translate(18.70,439.00) scale(1.12) translate(-6,-6)"><path d="M1 1.5l5 5 5-5" stroke="#333" stroke-width=".6" fill="none"/><circle cx="1" cy="1.5" r=".7" fill="#222"/><circle cx="11" cy="1.5" r=".7" fill="#222"/><rect x="4.8" y="7" width="2.4" height="3" fill="#222"/></g>
<g transform="translate(36.50,439.00) scale(1.12) translate(-6,-6)"><rect x="0.5" y="2" width="11" height="2.5" stroke="#2a2a2a" stroke-width=".9" fill="none"/><path d="M6 4.5v3" stroke="#333" stroke-width=".6"/><rect x="4.8" y="7.5" width="2.4" height="3" fill="#222"/></g>
<g transform="translate(54.20,439.00) scale(1.12) translate(-6,-6)"><rect x="0.5" y="2" width="11" height="2.5" stroke="#2a2a2a" stroke-width=".9" fill="none"/><path d="M6 4.5v3M0.5 9h11" stroke="#333" stroke-width=".6"/><rect x="4.8" y="7.5" width="2.4" height="3" fill="#222"/></g>
<g transform="translate(18.70,715.70) scale(1.12) translate(-6,-6)"><path d="M1.5 10l2-7h5l2.5 7z" fill="#b8e8b0" stroke="#5a9a5a" stroke-width=".6"/><path d="M5 5l3 2-3 2z" fill="#fff"/></g>
<g transform="translate(36.50,715.70) scale(1.12) translate(-6,-6)"><path d="M6 1.5c-2 3-3 4.5-3 6a3 3 0 006 0c0-1.5-1-3-3-6z" fill="#7ab8e8" stroke="#3a78b0" stroke-width=".5"/></g>
<g transform="translate(54.20,715.70) scale(1.12) translate(-6,-6)"><circle cx="6" cy="6" r="4.3" fill="#7ab0e0" stroke="#3a6a9a" stroke-width=".5"/><path d="M4 4l3 1-1 3" fill="#222"/></g>
<g transform="translate(72.00,715.70) scale(1.12) translate(-6,-6)"><rect x="1.5" y="1.5" width="9" height="9" fill="#eee" stroke="#555" stroke-width=".6"/><path d="M4.5 1.5v9M7.5 1.5v9M1.5 6h9" stroke="#555" stroke-width=".5"/></g>
<g transform="translate(18.70,729.30) scale(1.12) translate(-6,-6)"><path d="M1 10V5l5-3.5L11 5v5z" fill="#c83a3a"/><rect x="3" y="6.5" width="6" height="3.5" fill="#333"/><path d="M3 7.5h6M3 8.8h6" stroke="#aaa" stroke-width=".4"/></g>
<g transform="translate(36.50,729.30) scale(1.12) translate(-6,-6)"><rect x="0.5" y="2" width="9.5" height="6" fill="#3a3af0"/><rect x="6" y="6" width="5" height="5" fill="#fff" stroke="#333" stroke-width=".5"/><circle cx="8.5" cy="8.5" r="1.5" fill="#111"/></g>
<g transform="translate(54.20,729.30) scale(1.12) translate(-6,-6)"><path d="M1.5 8l6-5 3 2.5-6 5z" fill="#5a6ab0" stroke="#333" stroke-width=".5"/><path d="M4 6.5l3-2" stroke="#ccd" stroke-width=".6"/></g>
<g transform="translate(72.00,729.30) scale(1.12) translate(-6,-6)"><path d="M4 1.5l-2.5 5h2l-1 4 4-5.5h-2l1.5-3.5z" fill="#f0c020" stroke="#333" stroke-width=".4"/><path d="M7 7l4-4M7.5 9l3-2" stroke="#555" stroke-width=".8"/></g>
<g transform="translate(18.70,743.00) scale(1.12) translate(-6,-6)"><path d="M1.5 9l2-5h5l2 5z" fill="#eee" stroke="#555" stroke-width=".7"/><path d="M2 7h8" stroke="#555" stroke-width=".5"/></g>
<g transform="translate(36.50,743.00) scale(1.12) translate(-6,-6)"><rect x="1" y="2.5" width="9.5" height="7" fill="#c04040"/><rect x="2.5" y="6" width="6.5" height="2.5" fill="#fff"/></g>
<g transform="translate(54.20,743.00) scale(1.12) translate(-6,-6)"><path d="M1 7.5h6l1-3H3z" fill="#fff" stroke="#555" stroke-width=".5"/><path d="M7 6.5h4" stroke="#d8b030" stroke-width="1.5"/></g>
<g transform="translate(72.00,743.00) scale(1.12) translate(-6,-6)"><rect x="3" y="1" width="6" height="10" fill="#eee" stroke="#333" stroke-width=".6"/><rect x="5.5" y="2" width="1.5" height="8" fill="#111"/></g>
<g transform="translate(18.70,757.00) scale(1.12) translate(-6,-6)"><path d="M1 5h3l2-2h2v2h3v2H8v2H6L4 7H1z" fill="#d8b030" stroke="#555" stroke-width=".4"/></g>
<g transform="translate(36.50,757.00) scale(1.12) translate(-6,-6)"><path d="M3 1.5h6l-1 9H2z" fill="#bcd8f0" stroke="#555" stroke-width=".6"/><path d="M4 8l4-5" stroke="#fff" stroke-width=".7"/></g>
<g transform="translate(54.20,757.00) scale(1.12) translate(-6,-6)"><rect x="1.5" y="3" width="9" height="6.5" rx="1" fill="#eee" stroke="#333" stroke-width=".8"/><circle cx="7" cy="6.2" r="1.8" fill="none" stroke="#333" stroke-width=".7"/><rect x="2.5" y="4" width="2.5" height="2.5" fill="#555"/></g>
<g transform="translate(72.00,757.00) scale(1.12) translate(-6,-6)"><rect x="2" y="2" width="8" height="8.5" fill="#d8c0a0" stroke="#555" stroke-width=".5"/><path d="M4.5 2v8.5M7.5 2v8.5" stroke="#555" stroke-width=".4"/></g>
<g transform="translate(18.70,770.60) scale(1.12) translate(-6,-6)"><rect x="0.5" y="4" width="11" height="4" rx=".5" fill="#d8b890" stroke="#555" stroke-width=".5"/><path d="M2 5.5v1M4 5.5v1M6 5.5v1M8 5.5v1M10 5.5v1" stroke="#555" stroke-width=".4"/></g>
<g transform="translate(36.50,770.60) scale(1.12) translate(-6,-6)"><path d="M1 3h10M1 9h10M2 3v6M10 3v6" stroke="#444" stroke-width=".9"/><path d="M3 6h6" stroke="#444" stroke-width="1.5"/></g>
<g transform="translate(54.20,770.60) scale(1.12) translate(-6,-6)"><rect x="3" y="3.5" width="6" height="5" rx="1" fill="#4a8ac8" stroke="#225" stroke-width=".5"/><circle cx="2" cy="7" r="1.6" fill="#4a8ac8"/><circle cx="10" cy="7" r="1.6" fill="#4a8ac8"/></g>
<g transform="translate(72.00,770.60) scale(1.12) translate(-6,-6)"><rect x="2" y="3.5" width="8" height="5" rx="2.5" fill="#eee" stroke="#555" stroke-width=".6"/><path d="M4.5 3.5v5M7 6h3" stroke="#555" stroke-width=".5"/></g>
<g transform="translate(18.70,784.00) scale(1.12) translate(-6,-6)"><path d="M3 9a2 2 0 010-4 2.5 2.5 0 014.5-1 2.2 2.2 0 012 3.5 2 2 0 01-2 2.5z" fill="#e8e8e8" stroke="#666" stroke-width=".6"/><circle cx="5" cy="6.5" r="1.2" fill="none" stroke="#666" stroke-width=".5"/></g>
</svg>
<div class="t" style="left:21px;top:82px;color:#333">Basic</div>
<div class="t" style="left:22px;top:383.6px;color:#333">Tool Sets</div>
</div>
<div id="vp">
<div class="a" style="left:88px;top:80px;width:584px;height:13.3px;background:#c6c6c6"></div>
<div class="a" style="left:88.5px;top:82.4px;width:110.5px;height:11px;background:#ececec;border-radius:2.5px 2.5px 0 0"></div>
<svg style="left:93.5px;top:85.3px" width="6" height="6"><path d="M.8.8l4.4 4.4M5.2.8L.8 5.2" stroke="#333" stroke-width=".8"/></svg>
<div class="t" style="left:100.5px;top:84.6px;color:#333">Curtain Move...nt Example.vwx</div>
<div class="t" style="left:202.5px;top:84px;color:#444;font-size:8px">+</div>
<div class="a" style="left:87.3px;top:93.6px;width:583.7px;height:697.6px;border:1.6px solid #b44ecb;background:linear-gradient(180deg,#a3a09d 0%,#b1adaa 25%,#c3bfbb 50%,#d4d0cc 75%,#e2dfdb 100%)"></div>
<svg style="left:0;top:0" width="700" height="800">
<clipPath id="vpc"><rect x="89.5" y="95.3" width="579.5" height="694.2"/></clipPath>
<g clip-path="url(#vpc)">

<path d="M316.5 95L322.5 330" stroke="#6a72e0" stroke-width=".7" opacity=".8"/>
<path d="M323 470L330 790" stroke="#a8a6c8" stroke-width=".6" opacity=".6"/>
<path d="M90 466L145 459" stroke="#d09a9a" stroke-width=".5" opacity=".7"/>
<path d="M490 419L670 396" stroke="#d09a9a" stroke-width=".5" opacity=".7"/>
<path d="M200 357L262 382" stroke="#9ac89a" stroke-width=".5" opacity=".6"/>
<path d="M430 470L670 630" stroke="#a8d4a0" stroke-width=".6" opacity=".6"/>

<path d="M109.50 421.50L152.00 542.80L153.00 557.80L109.80 426.50z" fill="#b9b9b9" stroke="#9a9a9a" stroke-width=".5"/>
<path d="M152.00 542.80 L186.13 536.71 L218.48 530.94 L249.19 525.46 L278.39 520.26 L306.18 515.30 L332.67 510.58 L357.93 506.07 L382.06 501.76 L405.13 497.65 L427.21 493.71 L448.36 489.94 L468.63 486.32 L488.09 482.85 L506.77 479.52 L524.74 476.32 L542.01 473.24 L558.64 470.27 L574.66 467.41 L590.10 464.66 L605.00 462.00 L605.00 472.50 L590.10 475.38 L574.66 478.36 L558.64 481.44 L542.01 484.64 L524.74 487.94 L506.77 491.37 L488.09 494.93 L468.63 498.62 L448.36 502.46 L427.21 506.46 L405.13 510.62 L382.06 514.96 L357.93 519.49 L332.67 524.23 L306.18 529.17 L278.39 534.36 L249.19 539.79 L218.48 545.49 L186.13 551.49 L152.00 557.80z" fill="#d6d4d2"/>
<path d="M152.00 557.80L605.00 472.50" stroke="#777" stroke-width=".9"/>
<path d="M186.13 536.71v14.78" stroke="#6a6a6a" stroke-width="1"/>
<path d="M218.48 530.94v14.55" stroke="#6a6a6a" stroke-width="1"/>
<path d="M249.19 525.46v14.32" stroke="#6a6a6a" stroke-width="1"/>
<path d="M278.39 520.26v14.10" stroke="#6a6a6a" stroke-width="1"/>
<path d="M306.18 515.30v13.88" stroke="#6a6a6a" stroke-width="1"/>
<path d="M332.67 510.58v13.65" stroke="#6a6a6a" stroke-width="1"/>
<path d="M357.93 506.07v13.43" stroke="#6a6a6a" stroke-width="1"/>
<path d="M382.06 501.76v13.20" stroke="#6a6a6a" stroke-width="1"/>
<path d="M405.13 497.65v12.97" stroke="#6a6a6a" stroke-width="1"/>
<path d="M427.21 493.71v12.75" stroke="#6a6a6a" stroke-width="1"/>
<path d="M448.36 489.94v12.53" stroke="#6a6a6a" stroke-width="1"/>
<path d="M468.63 486.32v12.30" stroke="#6a6a6a" stroke-width="1"/>
<path d="M488.09 482.85v12.07" stroke="#6a6a6a" stroke-width="1"/>
<path d="M506.77 479.52v11.85" stroke="#6a6a6a" stroke-width="1"/>
<path d="M524.74 476.32v11.62" stroke="#6a6a6a" stroke-width="1"/>
<path d="M542.01 473.24v11.40" stroke="#6a6a6a" stroke-width="1"/>
<path d="M558.64 470.27v11.18" stroke="#6a6a6a" stroke-width="1"/>
<path d="M574.66 467.41v10.95" stroke="#6a6a6a" stroke-width="1"/>
<path d="M590.10 464.66v10.73" stroke="#6a6a6a" stroke-width="1"/>
<path d="M109.50 421.50L400.00 398.00L605.00 462.00L152.00 542.80z" fill="#f7f7f7"/>
<path d="M110.62 424.69L406.48 400.02" stroke="#d2d2d2" stroke-width=".7"/>
<path d="M111.80 428.05L413.23 402.13" stroke="#d2d2d2" stroke-width=".7"/>
<path d="M113.03 431.59L420.24 404.32" stroke="#d2d2d2" stroke-width=".7"/>
<path d="M114.34 435.31L427.54 406.60" stroke="#d2d2d2" stroke-width=".7"/>
<path d="M115.72 439.24L435.14 408.97" stroke="#d2d2d2" stroke-width=".7"/>
<path d="M117.17 443.39L443.07 411.45" stroke="#d2d2d2" stroke-width=".7"/>
<path d="M118.71 447.79L451.35 414.03" stroke="#d2d2d2" stroke-width=".7"/>
<path d="M120.34 452.45L460.00 416.73" stroke="#d2d2d2" stroke-width=".7"/>
<path d="M122.08 457.40L469.04 419.55" stroke="#d2d2d2" stroke-width=".7"/>
<path d="M123.93 462.67L478.51 422.51" stroke="#d2d2d2" stroke-width=".7"/>
<path d="M125.90 468.29L488.43 425.61" stroke="#d2d2d2" stroke-width=".7"/>
<path d="M128.00 474.30L498.84 428.86" stroke="#d2d2d2" stroke-width=".7"/>
<path d="M130.25 480.73L509.77 432.27" stroke="#d2d2d2" stroke-width=".7"/>
<path d="M132.67 487.64L521.27 435.86" stroke="#d2d2d2" stroke-width=".7"/>
<path d="M135.28 495.07L533.37 439.64" stroke="#d2d2d2" stroke-width=".7"/>
<path d="M138.09 503.10L546.14 443.62" stroke="#d2d2d2" stroke-width=".7"/>
<path d="M141.14 511.79L559.62 447.83" stroke="#d2d2d2" stroke-width=".7"/>
<path d="M144.44 521.23L573.87 452.28" stroke="#d2d2d2" stroke-width=".7"/>
<path d="M148.05 531.53L588.98 457.00" stroke="#d2d2d2" stroke-width=".7"/>
<path d="M152.00 542.80L605.00 462.00" stroke="#d2d2d2" stroke-width=".7"/>
<path d="M127.86 420.02L186.13 536.71" stroke="#6e6e6e" stroke-width=".7"/>
<path d="M145.71 418.57L218.48 530.94" stroke="#6e6e6e" stroke-width=".7"/>
<path d="M163.08 417.17L249.19 525.46" stroke="#6e6e6e" stroke-width=".7"/>
<path d="M179.99 415.80L278.39 520.26" stroke="#6e6e6e" stroke-width=".7"/>
<path d="M196.45 414.47L306.18 515.30" stroke="#6e6e6e" stroke-width=".7"/>
<path d="M212.49 413.17L332.67 510.58" stroke="#6e6e6e" stroke-width=".7"/>
<path d="M228.11 411.90L357.93 506.07" stroke="#6e6e6e" stroke-width=".7"/>
<path d="M243.34 410.67L382.06 501.76" stroke="#6e6e6e" stroke-width=".7"/>
<path d="M258.19 409.47L405.13 497.65" stroke="#6e6e6e" stroke-width=".7"/>
<path d="M272.68 408.30L427.21 493.71" stroke="#6e6e6e" stroke-width=".7"/>
<path d="M286.80 407.16L448.36 489.94" stroke="#6e6e6e" stroke-width=".7"/>
<path d="M300.59 406.04L468.63 486.32" stroke="#6e6e6e" stroke-width=".7"/>
<path d="M314.05 404.95L488.09 482.85" stroke="#6e6e6e" stroke-width=".7"/>
<path d="M327.20 403.89L506.77 479.52" stroke="#6e6e6e" stroke-width=".7"/>
<path d="M340.04 402.85L524.74 476.32" stroke="#6e6e6e" stroke-width=".7"/>
<path d="M352.58 401.84L542.01 473.24" stroke="#6e6e6e" stroke-width=".7"/>
<path d="M364.84 400.84L558.64 470.27" stroke="#6e6e6e" stroke-width=".7"/>
<path d="M376.82 399.87L574.66 467.41" stroke="#6e6e6e" stroke-width=".7"/>
<path d="M388.54 398.93L590.10 464.66" stroke="#6e6e6e" stroke-width=".7"/>
<path d="M152.00 542.80L605.00 462.00" stroke="#aaa" stroke-width=".5"/>

<!-- wall -->
<path d="M260.2 324.8L469.8 319.3L467.5 402L267.6 421.3Z" fill="#0a7c0a" stroke="#0a7c0a" stroke-width=".4"/>
<path d="M260.2 324.8L263 324.6L270 421L267.6 421.3Z" fill="#0c8a0c"/>
<path d="M267 388L330 418L268 421Z" fill="#076c07"/>
<path d="M440 392L467.5 380L467.5 402L430 405Z" fill="#076e07"/>
<!-- recess -->
<g transform="rotate(-3 365 368)">
<clipPath id="ec"><ellipse cx="366" cy="368" rx="88" ry="37"/></clipPath>
<g clip-path="url(#ec)">
<rect x="270" y="320" width="200" height="100" fill="#0a7a0a"/>
<path d="M270 320L374 326L340 410L270 410Z" fill="#005c00"/>
<path d="M374 326L340 410L418 406Z" fill="#0a6f0a"/>
</g>
</g>
<circle cx="335.5" cy="358.5" r="1" fill="#111"/>
<!-- ring -->
<path d="M388 322.5 C330 322 270 342 266.5 371 C268 400 320 418 372 417 C420 416 470 394 483.5 364.5 L458 363.5 C446 388 410 405 366 405.5 C320 405 293 390 291 371 C292 350 330 332 372 331.5 Z" fill="#0a900a" stroke="#0a900a" stroke-width=".4"/>
<path d="M388 322.5 C330 322 270 342 266.5 371 C268 392 300 408 340 414 L345 408 C310 402 281 390 279 371 C281 348 320 330 380 327 Z" fill="#12a612"/>
<path d="M340 414 C380 418 440 410 483.5 364.5 L470 364 C440 398 390 410 345 408Z" fill="#12a612"/>
<path d="M266.5 371 C268 400 320 418 372 417 C420 416 470 394 483.5 364.5 L481 372 C466 398 420 420 372 421 C320 421 270 404 268 378Z" fill="#098a09"/>
<path d="M458 363.5L483.5 364.5L478 361L454 360Z" fill="#18bc18"/>
<path d="M388 322.5L372 331.5L373 335L389 327Z" fill="#0d9d0d"/>
<!-- base -->
<path d="M263 418.5L467 401.8L490.2 408.3L282.5 431.5Z" fill="#17b017" stroke="#17b017" stroke-width=".4"/>
<path d="M282.5 431.5L490.2 408.3L490.2 424.5L282.5 450Z" fill="#0c8e0c" stroke="#0c8e0c" stroke-width=".4"/>
<path d="M263 418.5L467 401.8L477.4 404.7L271.8 424.4Z" fill="#0c8f0c"/>
<path d="M263 418.5L282.5 431.5L282.5 450L264.5 436.5Z" fill="#0b880b" stroke="#0b880b" stroke-width=".4"/>

<path d="M322.5 326L324 421" stroke="#5a62d0" stroke-width=".6" opacity=".55"/>

<text x="361" y="425" font-family="Liberation Sans" font-weight="bold" font-size="21" fill="#1aaee6" stroke="#1aaee6" stroke-width=".7" textLength="25.5" lengthAdjust="spacingAndGlyphs">UP</text>
<path d="M373.7 433V466" stroke="#1aaee6" stroke-width="1.6"/><path d="M371.2 436L373.7 429.5L376.2 436Z" fill="#1aaee6"/>
<path d="M346 459.5L399 453.5" stroke="#e8322a" stroke-width="1.3"/>
<g transform="translate(322,464) skewX(-8) rotate(-6)"><text x="0" y="0" font-family="Liberation Sans" font-weight="bold" font-size="9" fill="#e8322a" textLength="23" lengthAdjust="spacingAndGlyphs">SR</text></g>
<g transform="translate(399,456) skewX(-8) rotate(-6)"><text x="0" y="0" font-family="Liberation Sans" font-weight="bold" font-size="8" fill="#e8322a" textLength="22" lengthAdjust="spacingAndGlyphs">SL</text></g>
<g transform="translate(343,452) rotate(-8)"><text x="0" y="0" font-family="Liberation Sans" font-weight="bold" font-size="7" fill="#7ee6a0" textLength="24" lengthAdjust="spacingAndGlyphs">US</text></g>
<g transform="translate(380,471) rotate(-4)"><text x="0" y="0" font-family="Liberation Sans" font-weight="bold" font-size="7" fill="#5ed880" textLength="26" lengthAdjust="spacingAndGlyphs">DS</text></g>
<path d="M362 451L387 463" stroke="#80e0a0" stroke-width="1"/>


<g>
<path d="M116 720L128 711L160 712L170 722L170 752L160 763L126 763L113 752Z" fill="#c3d7e6" stroke="#9fd2f6" stroke-width="1.2"/>
<path d="M126 722L134 722L130 770L126 763Z" fill="#a8d6f6" opacity=".7"/>
<path d="M128 711L160 712L170 722L134 722Z" fill="#c8dcea" stroke="#a4d4f6" stroke-width=".6"/>
<path d="M130.9 710.6V768" stroke="#2a6af0" stroke-width="1"/>
<path d="M130.9 768L107.4 757" stroke="#39c44a" stroke-width="1"/>
<path d="M130.9 768L175.7 762.8" stroke="#e8504a" stroke-width="1"/>
<ellipse cx="151" cy="743" rx="11" ry="4.5" fill="#fff"/>
<text x="144" y="745" font-family="Liberation Sans" font-size="5.5" fill="#2a4af0" font-weight="bold">Front</text>
<ellipse cx="121" cy="740" rx="3.5" ry="4.5" fill="#fff"/>
<text x="119" y="742" font-family="Liberation Sans" font-size="4.5" fill="#2a4af0" font-weight="bold">Let</text>
<ellipse cx="139" cy="717" rx="9" ry="1.6" fill="#fff"/>
<path d="M137 713.5h4" stroke="#2a4af0" stroke-width="1.2"/>
<text x="101.5" y="759" font-family="Liberation Sans" font-size="6.5" font-weight="bold" fill="#39c44a">Y</text>
<text x="180" y="765" font-family="Liberation Sans" font-size="6.5" font-weight="bold" fill="#e04a40">X</text>
</g>

</g>
</svg>
</div>
<div id="oi">
<div class="a" style="left:671px;top:80px;width:3px;height:711px;background:#c6c6c6"></div>
<div class="ph" style="left:674px;top:80.2px;width:157.5px;height:9px"></div>
<svg style="left:675.8px;top:81.3px" width="7" height="7"><path d="M.6.6l5.4 5.4M6 .6L.6 6" stroke="#333" stroke-width=".8"/></svg>
<div class="t" style="left:684px;top:82px;color:#333;font-size:6.4px">Object Info - Data</div>
<svg style="left:812px;top:81.5px" width="18" height="7"><path d="M1.5 1.5h5M1.5 3.3h5M1.5 5.1h5" stroke="#555" stroke-width=".8"/><text x="10" y="6.3" font-family="Liberation Sans" font-weight="bold" font-size="7" fill="#444">?</text></svg>
<div class="a" style="left:674px;top:89.2px;width:157.5px;height:15.2px;background:#c6c6c6"></div>
<div class="a" style="left:714px;top:91px;width:38.6px;height:13.4px;background:#ececec;border-radius:3px 3px 0 0"></div>
<div class="a" style="left:790.5px;top:93px;width:.8px;height:9px;background:#999"></div>
<svg style="left:677px;top:91.5px" width="115" height="11"><circle cx="3.8" cy="6.8" r="2.7" fill="none" stroke="#444" stroke-width=".85"/><path d="M5 3.9V1.5h6.5v5.3H7" fill="none" stroke="#444" stroke-width=".85"/><path d="M41 2h9v5.5h-3l-1.5 1.5-1.5-1.5h-3z" fill="none" stroke="#444" stroke-width=".8"/><path d="M43.5 4h4" stroke="#444" stroke-width=".7"/><path d="M79 2.5h9l-1 3c-.5 2-2 3-3.5 3s-3-1-3.5-3z" fill="none" stroke="#444" stroke-width=".8"/><path d="M82.5 2.5l1-1 1 1" fill="none" stroke="#444" stroke-width=".6"/></svg>
<div class="t" style="left:691px;top:94.5px;color:#3a3a3a">Shape</div>
<div class="t" style="left:730px;top:94.5px;color:#3a3a3a">Data</div>
<div class="t" style="left:768px;top:94.5px;color:#3a3a3a">Render</div>
<div class="a" style="left:674px;top:104.4px;width:157.5px;height:29px;background:#ececec"></div>
<div class="t" style="left:676px;top:108.3px;color:#262626;font-weight:bold">Document Record Format Defaults</div>
<div class="a" style="left:674px;top:118.2px;width:157.5px;height:.8px;background:#dcdcdc"></div>
<div class="t" style="left:676px;top:122.7px;color:#333">Data Sheet:</div>
<div class="a" style="left:713.3px;top:121.7px;width:115px;height:8.5px;background:#f3f3f3;border-radius:2.5px"></div>
<div class="t" style="left:717px;top:122.8px;color:#c4c4c4">&lt;Default Settings&gt;</div>
<svg style="left:822px;top:122.5px" width="5" height="7"><path d="M1 2.5l1.5-1.5 1.5 1.5M1 4.5l1.5 1.5 1.5-1.5" fill="none" stroke="#aaa" stroke-width=".6"/></svg>
<div class="a" style="left:674px;top:133.2px;width:157.5px;height:157.5px;background:#fff"></div>
<div class="a" style="left:674px;top:133.2px;width:157.5px;height:13.2px;background:#fafafa;border-bottom:.8px solid #e8e8e8"></div>
<div class="t" style="left:683.8px;top:136.5px;color:#333">Record Formats:</div>
<div class="a" style="left:674px;top:146.5px;width:157.5px;height:2.6px;overflow:hidden"><div class="t" style="left:8.8px;top:-2.6px;color:#444">Gobo Record Format</div></div>
<div class="a" style="left:674px;top:233.7px;width:157.5px;height:10.5px;background:#dcdcdc"></div>
<div class="t" style="left:682.8px;top:152.3px;color:#333">Light Info Record</div>
<div class="t" style="left:682.8px;top:162.7px;color:#333">Parts</div>
<div class="t" style="left:682.8px;top:173.1px;color:#333">Rigging Object Info</div>
<div class="t" style="left:682.8px;top:183.5px;color:#333">Stand Record Format</div>
<div class="t" style="left:682.8px;top:193.9px;color:#333">Truss Chord Info Record</div>
<div class="t" style="left:682.8px;top:204.3px;color:#333">Truss Record</div>
<div class="t" style="left:682.8px;top:214.7px;color:#333">Video Acc</div>
<div class="t" style="left:682.8px;top:225.1px;color:#333">Video LED</div>
<div class="t" style="left:682.8px;top:235.5px;color:#333">Xform_DMX</div>
<div class="a" style="left:674px;top:245.3px;width:157.5px;height:9.3px;background:#f4f4f4;border-bottom:.8px solid #e2e2e2"></div>
<div class="t" style="left:674px;width:157.5px;text-align:center;top:247.0px;color:#c2c2c2">Attach Record</div>
<div class="a" style="left:674px;top:255.6px;width:157.5px;height:9.3px;background:#f4f4f4;border-bottom:.8px solid #e2e2e2"></div>
<div class="t" style="left:674px;width:157.5px;text-align:center;top:257.3px;color:#c2c2c2">Attach IFC...</div>
<div class="a" style="left:674px;top:265.9px;width:157.5px;height:9.3px;background:#f4f4f4;border-bottom:.8px solid #e2e2e2"></div>
<div class="t" style="left:674px;width:157.5px;text-align:center;top:267.6px;color:#c2c2c2">Assign Classifications...</div>
<div class="a" style="left:674px;top:276.2px;width:157.5px;height:9.3px;background:#f4f4f4;border-bottom:.8px solid #e2e2e2"></div>
<div class="t" style="left:674px;width:157.5px;text-align:center;top:277.9px;color:#c2c2c2">Detach...</div>
<div class="a" style="left:751px;top:287.5px;width:1px;height:1px;background:#bbb"></div>
<div class="a" style="left:674px;top:290.7px;width:157.5px;height:193px;background:#ececec"></div>
<div class="t" style="left:677.9px;top:295.1px;color:#333">Universe:</div>
<div class="a" style="left:729.8px;top:294.0px;width:98.3px;height:8.5px;background:#fff;border-radius:1px"></div>
<div class="t" style="left:731.5px;top:295.1px;color:#333">0</div>
<div class="t" style="left:677.9px;top:307.7px;color:#333">Channel:</div>
<div class="a" style="left:729.8px;top:306.8px;width:98.3px;height:8.5px;background:#fff;border-radius:1px"></div>
<div class="t" style="left:731.5px;top:307.9px;color:#333">0</div>
<div class="t" style="left:677.9px;top:320.0px;color:#333">Delta X:</div>
<div class="a" style="left:729.8px;top:319.0px;width:98.3px;height:8.5px;background:#fff;border-radius:1px"></div>
<div class="t" style="left:731.5px;top:320.1px;color:#333">0"</div>
<div class="t" style="left:677.9px;top:332.5px;color:#333">Delta Y:</div>
<div class="a" style="left:729.8px;top:331.6px;width:98.3px;height:8.5px;background:#fff;border-radius:1px"></div>
<div class="t" style="left:731.5px;top:332.7px;color:#333">0"</div>
<div class="t" style="left:677.9px;top:344.9px;color:#333">Delta Z:</div>
<div class="a" style="left:729.8px;top:344.0px;width:98.3px;height:8.5px;background:#fff;border-radius:1px"></div>
<div class="t" style="left:731.5px;top:345.1px;color:#333">0"</div>
<div class="t" style="left:677.9px;top:358.1px;color:#333">Rotation Axis:</div>
<div class="a" style="left:729.8px;top:357.2px;width:98.3px;height:8.5px;background:#fff;border-radius:1px"></div>
<div class="t" style="left:733px;top:358.3px;color:#333">None</div>
<div class="bb" style="left:819.2px;right:auto;top:357.5px;width:7.5px;height:7.8px"></div>
<div class="t" style="left:677.9px;top:372.0px;color:#333">Rotation Delta:</div>
<div class="a" style="left:729.8px;top:371.0px;width:98.3px;height:8.5px;background:#fff;border-radius:1px"></div>
<div class="t" style="left:731.5px;top:372.1px;color:#333">360°</div>
<div class="t" style="left:677.9px;top:384.4px;color:#333">Rotation RPM:</div>
<div class="a" style="left:729.8px;top:383.5px;width:98.3px;height:8.5px;background:#fff;border-radius:1px"></div>
<div class="t" style="left:731.5px;top:384.6px;color:#333">120</div>
<div class="t" style="left:677.9px;top:396.7px;color:#333">Scale X:</div>
<div class="a" style="left:729.8px;top:395.8px;width:98.3px;height:8.5px;background:#fff;border-radius:1px"></div>
<div class="t" style="left:731.5px;top:396.9px;color:#333">300.00%</div>
<div class="t" style="left:677.9px;top:409.1px;color:#333">Scale Y:</div>
<div class="a" style="left:729.8px;top:408.2px;width:98.3px;height:8.5px;background:#fff;border-radius:1px"></div>
<div class="t" style="left:731.5px;top:409.3px;color:#333">300.00%</div>
<div class="t" style="left:677.9px;top:421.4px;color:#333">Scale Z:</div>
<div class="a" style="left:729.8px;top:420.5px;width:98.3px;height:8.5px;background:#fff;border-radius:1px"></div>
<div class="t" style="left:731.5px;top:421.6px;color:#333">300.00%</div>
<div class="t" style="left:677.9px;top:433.7px;color:#333">Rotation Point X:</div>
<div class="a" style="left:729.8px;top:433.0px;width:98.3px;height:8.5px;background:#fff;border-radius:1px"></div>
<div class="t" style="left:731.5px;top:434.1px;color:#333">5'0"</div>
<div class="t" style="left:677.9px;top:446.3px;color:#333">Rotation Point Y:</div>
<div class="a" style="left:729.8px;top:445.4px;width:98.3px;height:8.5px;background:#fff;border-radius:1px"></div>
<div class="t" style="left:731.5px;top:446.5px;color:#333">0"</div>
<div class="t" style="left:677.9px;top:458.7px;color:#333">Rotation Point Z:</div>
<div class="a" style="left:729.8px;top:457.8px;width:98.3px;height:8.5px;background:#fff;border-radius:1px"></div>
<div class="t" style="left:731.5px;top:458.9px;color:#333">0"</div>
<div class="a" style="left:674px;top:473px;width:157.5px;height:10px;background:#f0f0f0"></div>
<div class="t" style="left:676px;top:475px;color:#c8c8c8">Name:</div>
<div class="a" style="left:694px;top:473px;width:135px;height:9.5px;background:#f4f4f4"></div>
</div>
<div id="nav">
<div class="a" style="left:674px;top:483.5px;width:157.5px;height:3.5px;background:#c6c6c6"></div>
<div class="ph" style="left:674px;top:487px;width:157.5px;height:9.2px"></div>
<svg style="left:675.8px;top:488.3px" width="7" height="7"><path d="M.6.6l5.4 5.4M6 .6L.6 6" stroke="#333" stroke-width=".8"/></svg>
<div class="t" style="left:684px;top:488.8px;color:#333">Navigation - Design Layers</div>
<svg style="left:812px;top:488.5px" width="18" height="7"><path d="M1.5 1.5h5M1.5 3.3h5M1.5 5.1h5" stroke="#777" stroke-width=".8"/><text x="10" y="6.3" font-family="Liberation Sans" font-weight="bold" font-size="7" fill="#444">?</text></svg>
<div class="a" style="left:674px;top:496.2px;width:157.5px;height:15px;background:#c6c6c6"></div>
<div class="a" style="left:690.8px;top:497.5px;width:14.8px;height:13.7px;background:#e8e8e8;border-radius:2px 2px 0 0"></div>
<div class="a" style="left:706px;top:498px;width:13.5px;height:12px;background:#a8a8a8;border-radius:2px"></div>
<svg style="left:676px;top:497.5px" width="90" height="14"><circle cx="3" cy="7" r="1.3" fill="#555"/><circle cx="7.5" cy="4" r="1.3" fill="#555"/><circle cx="11" cy="7.5" r="1.3" fill="#555"/><circle cx="7" cy="10.5" r="1.3" fill="#555"/><path d="M3 7L7.5 4 11 7.5 7 10.5z" fill="none" stroke="#777" stroke-width=".6"/><path d="M22 1.8l5 2.4-5 2.4-5-2.4z" fill="#444"/><path d="M17 6.3l5 2.4 5-2.4M17 8.6l5 2.4 5-2.4" fill="none" stroke="#444" stroke-width="1.2"/><rect x="32.2" y="3" width="9" height="7" rx=".6" fill="none" stroke="#555" stroke-width=".9"/><path d="M33.5 5h5" stroke="#777" stroke-width=".6"/><path d="M37.5 10h4.5" stroke="#555" stroke-width=".8"/><path d="M46 10.5l2-6.5h5l2 6.5M47 3l-1-1.6M54 3l1-1.6" fill="none" stroke="#555" stroke-width=".8"/><circle cx="46" cy="11" r="1" fill="none" stroke="#555" stroke-width=".6"/><circle cx="55" cy="11" r="1" fill="none" stroke="#555" stroke-width=".6"/><path d="M60.5 1.5h4.5l2.5 2.5v7h-7z" fill="none" stroke="#555" stroke-width=".8"/><ellipse cx="66" cy="9.5" rx="3" ry="1.8" fill="#222"/><circle cx="66" cy="9.5" r=".7" fill="#ddd"/><path d="M75 3.5h5l2 2v5.5h-7z" fill="none" stroke="#555" stroke-width=".8"/><path d="M76 8.5a2.5 2.5 0 014-2l-1 .3M80.5 6a2.5 2.5 0 01-4 2.5" fill="none" stroke="#555" stroke-width=".7"/><path d="M68.7 1v12M84.5 1v12" stroke="#aaa" stroke-width=".6"/></svg>
<div class="a" style="left:674px;top:511.2px;width:157.5px;height:40px;background:#ececec"></div>
<div class="t" style="left:676px;top:514px;color:#333">Layer Options:</div>
<div class="a" style="left:719.3px;top:513px;width:110.3px;height:8.5px;background:#fff;border-radius:2px"></div>
<div class="t" style="left:722.5px;top:514.2px;color:#333">Show Others</div>
<div class="t" style="left:676px;top:524.5px;color:#333">Filter:</div>
<div class="a" style="left:719.3px;top:523.5px;width:110.3px;height:8.5px;background:#fff;border-radius:2px"></div>
<div class="t" style="left:722.5px;top:524.7px;color:#333">&lt;All Layers&gt;</div>
<div class="a" style="left:821.7px;top:513.5px;width:7.8px;height:7.8px;background:#1a7cf5;border-radius:2px"></div>
<svg style="left:822.7px;top:514.5px" width="6" height="6"><path d="M1.5 2.3l1.4-1.2 1.4 1.2M1.5 3.7l1.4 1.2 1.4-1.2" fill="none" stroke="#fff" stroke-width=".6"/></svg>
<div class="a" style="left:821.7px;top:524px;width:7.8px;height:7.8px;background:#1a7cf5;border-radius:2px"></div>
<svg style="left:822.7px;top:525px" width="6" height="6"><path d="M1.5 2.3l1.4-1.2 1.4 1.2M1.5 3.7l1.4 1.2 1.4-1.2" fill="none" stroke="#fff" stroke-width=".6"/></svg>
<div class="a" style="left:675px;top:534px;width:155px;height:9.3px;background:#fff;border-radius:2.5px;box-shadow:0 0 0 .5px #e0e0e0"></div>
<svg style="left:678.5px;top:535.5px" width="7" height="7"><circle cx="3" cy="3" r="2" fill="none" stroke="#555" stroke-width=".7"/><path d="M4.5 4.5l1.8 1.8" stroke="#555" stroke-width=".7"/></svg>
<div class="t" style="left:688px;top:535.5px;color:#cfcfcf">Search</div>
<div class="a" style="left:674px;top:544.5px;width:157.5px;height:246.5px;background:#fff"></div>
<div class="t" style="left:677px;top:549px;color:#555">Visibi...</div>
<div class="t" style="left:717px;top:549px;color:#555">Design Layer Name</div>
<div class="t" style="left:792.5px;top:549px;color:#555">#</div>
<div class="t" style="left:806px;top:549px;color:#555">Story</div>
<div class="a" style="left:701px;top:548px;width:.6px;height:7.5px;background:#e2e2e2"></div>
<div class="a" style="left:715.4px;top:548px;width:.6px;height:7.5px;background:#e2e2e2"></div>
<div class="a" style="left:790.6px;top:548px;width:.6px;height:7.5px;background:#e2e2e2"></div>
<div class="a" style="left:804px;top:548px;width:.6px;height:7.5px;background:#e2e2e2"></div>
<div class="a" style="left:683.5px;top:567px;width:.6px;height:224px;background:#f0f0f0"></div>
<div class="a" style="left:692px;top:567px;width:.6px;height:224px;background:#f0f0f0"></div>
<div class="a" style="left:700px;top:567px;width:.6px;height:224px;background:#f0f0f0"></div>
<div class="a" style="left:674px;top:558.7px;width:157.5px;height:8.7px;background:#b9d8f9"></div>
<div class="t" style="left:716px;top:559.7px;color:#262626;font-weight:bold;">Solid Addition</div>
<div class="t" style="left:792.5px;top:559.7px;color:#262626">1</div>
<div class="t" style="left:716px;top:568.5px;color:#262626;">Light Plot</div>
<div class="t" style="left:792.5px;top:568.5px;color:#262626">2</div>
<div class="t" style="left:716px;top:577.0px;color:#262626;">Generic Solid</div>
<div class="t" style="left:792.5px;top:577.0px;color:#262626">3</div>
<div class="t" style="left:716px;top:585.7px;color:#262626;">Soft Goods</div>
<div class="t" style="left:792.5px;top:585.7px;color:#262626">4</div>
<div class="t" style="left:716px;top:594.3px;color:#262626;">Scenery</div>
<div class="t" style="left:792.5px;top:594.3px;color:#262626">5</div>
<div class="t" style="left:716px;top:602.9px;color:#262626;">Theatre FloorPlan</div>
<div class="t" style="left:792.5px;top:602.9px;color:#262626">6</div>
<svg style="left:674px;top:558px" width="40" height="55"><path d="M1.3 5c1.8-2.6 6.2-2.6 8 0-1.8 2.6-6.2 2.6-8 0z" fill="none" stroke="#444" stroke-width=".8"/><circle cx="5.3" cy="5" r="1.5" fill="#444"/><path d="M29.5 5.3l2.2 2.4 4.6-5" fill="none" stroke="#1a1a1a" stroke-width="1.1"/><path d="M10.2 10.8l5.6 5.6M15.8 10.8l-5.6 5.6M10.2 19.4l5.6 5.6M15.8 19.4l-5.6 5.6M10.2 28l5.6 5.6M15.8 28l-5.6 5.6M10.2 36.6l5.6 5.6M15.8 36.6l-5.6 5.6" stroke="#222" stroke-width=".8"/><path d="M1.3 48c1.8-2.6 6.2-2.6 8 0-1.8 2.6-6.2 2.6-8 0z" fill="none" stroke="#444" stroke-width=".8"/><circle cx="5.3" cy="48" r="1.5" fill="#444"/></svg>
</div>
<div class="a" style="left:10px;top:791px;width:821.5px;height:11.5px;background:#ececec;border-radius:0 0 5px 5px"></div>
<div class="t" style="left:13.5px;top:794.3px;color:#333">Selection Tool</div>
<svg style="left:59px;top:794.5px" width="6" height="6"><path d="M.8.8l4.4 4.4M5.2.8L.8 5.2" stroke="#222" stroke-width=".9"/></svg>
<div class="t" style="left:68.4px;top:794.3px;color:#333">Rectangular Marquee Mode</div>
<div class="t" style="left:598px;top:794.3px;color:#333">X: 31'2 3/4"</div>
<div class="t" style="left:675.4px;top:794.3px;color:#333">Y: 68'11 1/4"</div>
<div class="t" style="left:752.4px;top:794.3px;color:#333">Z: 37'11.316"</div>
<div id="eosw">
<div class="a" style="left:832px;top:14px;width:596px;height:13.5px;background:#e8e8e8;border-radius:5px 5px 0 0"></div>
<div class="a" style="left:835.6px;top:17.4px;width:6px;height:6px;border-radius:50%;background:#d2d2d2"></div>
<div class="a" style="left:845.1px;top:17.4px;width:6px;height:6px;border-radius:50%;background:#d2d2d2"></div>
<div class="a" style="left:854.5px;top:17.4px;width:6px;height:6px;border-radius:50%;background:#d2d2d2"></div>
<div class="t" style="left:1120px;top:17.8px;color:#a0a0a0;font-size:5.6px">Eos : 1</div>
<div class="a" style="left:832px;top:27.5px;width:596px;height:15.5px;background:#141414"></div>
<div class="a" style="left:832px;top:43px;width:596px;height:1px;background:#a8780e"></div>
<div class="a" style="left:832.5px;top:43px;width:1px;height:674px;background:#5a4210"></div>
<div class="a" style="left:1427px;top:43px;width:1px;height:674px;background:#5a4210"></div>
<svg style="left:836px;top:29px" width="95" height="13"><rect x="2.5" y="2" width="12" height="8" rx="2" fill="#0a0a14" stroke="#c08a10" stroke-width="1"/><path d="M5.5 12h6" stroke="#c08a10" stroke-width="1"/><path d="M8.5 10v2" stroke="#c08a10" stroke-width="1"/><text x="7" y="8.5" font-family="Liberation Sans" font-size="6" font-weight="bold" fill="#eee">1</text><rect x="27" y="2" width="12.5" height="8" rx="2" fill="#0a0a14" stroke="#c08a10" stroke-width="1" stroke-dasharray="5 1.2"/><text x="31.5" y="8.5" font-family="Liberation Sans" font-size="6" font-weight="bold" fill="#eee">1</text><rect x="51.5" y="2" width="12.5" height="8" rx="2" fill="#0a0a14" stroke="#7a7a80" stroke-width=".9" stroke-dasharray="5 1.2"/><rect x="76.5" y="2" width="12.5" height="8" rx="2" fill="#0a0a14" stroke="#7a7a80" stroke-width=".9" stroke-dasharray="5 1.2"/></svg>
<div class="t" style="left:1074.3px;top:31.6px;color:#e6e6e6;font-size:7.33px">2025 Curtain Movement Example*</div>
<svg style="left:1275px;top:29px" width="90" height="12"><path d="M3 11l7-8" stroke="#c8c8c8" stroke-width=".9"/><circle cx="10" cy="4" r="2.8" fill="none" stroke="#555" stroke-width=".6"/><path d="M26 2h5l-1.5 3.5 1.5 5h-5l1.5-5z" fill="#c8c8c8"/><path d="M32 2h5l-2 8.5h-2.5l1.5-4.5z" fill="#c8c8c8"/><rect x="49.5" y="3" width="12" height="7" rx="1.2" fill="none" stroke="#b0b0b0" stroke-width=".9"/><circle cx="55.5" cy="6.5" r="2" fill="none" stroke="#b0b0b0" stroke-width=".9"/><path d="M75 2.5h9M75 4.5h9M75 6.5h9M75 8.5h9M75 10.5h9" stroke="#8a8a8a" stroke-width="1.1" stroke-dasharray="1.2 .6"/></svg>
<div class="t" style="left:1373.5px;top:31px;color:#cbbfd6;font-size:9.1px;font-weight:bold">3:53:14 PM</div>
<div class="a" style="left:836.4px;top:47.4px;width:30.6px;height:16.8px;border:1px solid #4a4558;background:#161616;border-radius:1.5px;"></div>
<div class="a" style="left:836.4px;top:47.4px;width:30.6px;height:16.8px;display:flex;align-items:center;justify-content:center;text-align:center;color:#3e3a50;font-size:6.4px;font-weight:bold;white-space:nowrap">Intens</div>
<div class="a" style="left:836.4px;top:66.5px;width:30.6px;height:17.0px;border:1px solid #4a4558;background:#161616;border-radius:1.5px;"></div>
<div class="a" style="left:836.4px;top:66.5px;width:30.6px;height:17.0px;display:flex;align-items:center;justify-content:center;text-align:center;color:#e0a010;font-size:6.4px;font-weight:bold;white-space:nowrap">Focus</div>
<div class="a" style="left:836.4px;top:85.5px;width:30.6px;height:17.2px;border:1px solid #4a4558;background:#161616;border-radius:1.5px;"></div>
<div class="a" style="left:836.4px;top:85.5px;width:30.6px;height:17.2px;display:flex;align-items:center;justify-content:center;text-align:center;color:#3e3a50;font-size:6.4px;font-weight:bold;white-space:nowrap">Color</div>
<div class="a" style="left:836.4px;top:104.2px;width:30.6px;height:17.3px;border:1px solid #4a4558;background:#161616;border-radius:1.5px;"></div>
<div class="a" style="left:836.4px;top:104.2px;width:30.6px;height:17.3px;display:flex;align-items:center;justify-content:center;text-align:center;color:#e0a010;font-size:6.4px;font-weight:bold;white-space:nowrap">Form</div>
<div class="a" style="left:836.4px;top:123.4px;width:30.6px;height:17.4px;border:1px solid #4a4558;background:#161616;border-radius:1.5px;"></div>
<div class="a" style="left:836.4px;top:123.4px;width:30.6px;height:17.4px;display:flex;align-items:center;justify-content:center;text-align:center;color:#3e3a50;font-size:6.4px;font-weight:bold;white-space:nowrap">Image</div>
<div class="a" style="left:836.4px;top:142.3px;width:30.6px;height:17.4px;border:1px solid #4a4558;background:#161616;border-radius:1.5px;"></div>
<div class="a" style="left:836.4px;top:142.3px;width:30.6px;height:17.4px;display:flex;align-items:center;justify-content:center;text-align:center;color:#3e3a50;font-size:6.4px;font-weight:bold;white-space:nowrap">Shutter</div>
<div class="a" style="left:836.4px;top:164.0px;width:30.6px;height:19.0px;border:1px solid #4a4558;background:#161616;border-radius:1.5px;"></div>
<div class="a" style="left:836.4px;top:164.0px;width:30.6px;height:19.0px;display:flex;align-items:center;justify-content:center;text-align:center;color:#e6e6e6;font-size:6.2px;white-space:nowrap"><svg width="9" height="9" style="position:static"><path d="M4.5 1L1 4.3h1.2V8h4.6V4.3H8z" fill="none" stroke="#e6e6e6" stroke-width=".9" stroke-linejoin="round"/><path d="M3.3 6h2.4M3.3 7.3h2.4" stroke="#e6e6e6" stroke-width=".6"/></svg></div>
<div class="a" style="left:836.4px;top:185.0px;width:30.6px;height:18.0px;border:1px solid #4a4558;background:#161616;border-radius:1.5px;"></div>
<div class="a" style="left:836.4px;top:185.0px;width:30.6px;height:18.0px;display:flex;align-items:center;justify-content:center;text-align:center;color:#e6e6e6;font-size:6.4px;white-space:nowrap">AllNPs</div>
<div class="a" style="left:870.0px;top:48.9px;width:31.0px;height:12.1px;border:1px solid #4a4558;background:#161616;border-radius:1.5px;"></div>
<div class="a" style="left:870.0px;top:48.9px;width:31.0px;height:12.1px;display:flex;align-items:center;justify-content:center;text-align:center;color:#e0a010;font-size:6.2px;font-weight:bold;white-space:nowrap">Focus</div>
<div class="a" style="left:870.0px;top:62.7px;width:31.0px;height:18.8px;border:1px solid #4a4558;background:#161616;border-radius:1.5px;"></div>
<div class="a" style="left:870.0px;top:62.7px;width:31.0px;height:18.8px;display:flex;align-items:center;justify-content:center;text-align:center;color:#e6e6e6;font-size:6.2px;white-space:nowrap"><svg width="9" height="9" style="position:static"><path d="M4.5 1L1 4.3h1.2V8h4.6V4.3H8z" fill="none" stroke="#e6e6e6" stroke-width=".9" stroke-linejoin="round"/><path d="M3.3 6h2.4M3.3 7.3h2.4" stroke="#e6e6e6" stroke-width=".6"/></svg></div>
<div class="a" style="left:870.0px;top:83.2px;width:31.0px;height:18.6px;border:1px solid #4a4558;background:#161616;border-radius:1.5px;"></div>
<div class="a" style="left:870.0px;top:83.2px;width:31.0px;height:18.6px;display:flex;align-items:center;justify-content:center;text-align:center;color:#e6e6e6;font-size:7px;font-weight:bold;white-space:nowrap">-</div>
<div class="a" style="left:870.0px;top:103.7px;width:31.0px;height:20.3px;border:1px solid #4a4558;background:#161616;border-radius:1.5px;"></div>
<div class="a" style="left:870.0px;top:103.7px;width:31.0px;height:20.3px;display:flex;align-items:center;justify-content:center;text-align:center;color:#e6e6e6;font-size:6.3px;line-height:7.3px;white-space:nowrap">Invert<br>Pan</div>
<div class="a" style="left:870.0px;top:126.0px;width:31.0px;height:20.7px;border:1px solid #4a4558;background:#161616;border-radius:1.5px;"></div>
<div class="a" style="left:870.0px;top:126.0px;width:31.0px;height:20.7px;display:flex;align-items:center;justify-content:center;text-align:center;color:#e6e6e6;font-size:6.1px;white-space:nowrap">Invert Tilt</div>
<div class="a" style="left:870.0px;top:148.8px;width:31.0px;height:21.0px;border:1px solid #4a4558;background:#161616;border-radius:1.5px;"></div>
<div class="a" style="left:870.0px;top:148.8px;width:31.0px;height:21.0px;display:flex;align-items:center;justify-content:center;text-align:center;color:#e6e6e6;font-size:5.4px;line-height:6px;white-space:nowrap">XYZ<br>Format<br>Enable</div>
<div class="a" style="left:1032.0px;top:49.0px;width:30.8px;height:11.8px;border:1px solid #4a4558;background:#161616;border-radius:1.5px;"></div>
<div class="a" style="left:1032.0px;top:49.0px;width:30.8px;height:11.8px;display:flex;align-items:center;justify-content:center;text-align:center;color:#e0a010;font-size:6.2px;font-weight:bold;white-space:nowrap">Form</div>
<div class="a" style="left:1032.0px;top:63.0px;width:30.8px;height:18.5px;border:1px solid #4a4558;background:#161616;border-radius:1.5px;"></div>
<div class="a" style="left:1032.0px;top:63.0px;width:30.8px;height:18.5px;display:flex;align-items:center;justify-content:center;text-align:center;color:#e6e6e6;font-size:6.2px;white-space:nowrap"><svg width="9" height="9" style="position:static"><path d="M4.5 1L1 4.3h1.2V8h4.6V4.3H8z" fill="none" stroke="#e6e6e6" stroke-width=".9" stroke-linejoin="round"/><path d="M3.3 6h2.4M3.3 7.3h2.4" stroke="#e6e6e6" stroke-width=".6"/></svg></div>
<div class="a" style="left:1032.0px;top:83.3px;width:30.8px;height:18.5px;border:1px solid #4a4558;background:#161616;border-radius:1.5px;"></div>
<div class="a" style="left:1032.0px;top:83.3px;width:30.8px;height:18.5px;display:flex;align-items:center;justify-content:center;text-align:center;color:#e6e6e6;font-size:7px;font-weight:bold;white-space:nowrap">-</div>
<div class="a" style="left:903.1px;top:61px;width:41.1px;height:143px;background:#131313"></div>
<div class="a" style="left:903.6px;top:48.9px;width:38.6px;height:12.1px;border:1px solid #4a4558;background:#161616;border-radius:1.5px;"></div>
<div class="a" style="left:903.6px;top:48.9px;width:38.6px;height:12.1px;display:flex;align-items:center;justify-content:center;text-align:center;color:#e6e6e6;font-size:6.1px;white-space:nowrap">Coordinate X</div>
<div class="a" style="left:903.6px;top:65px;width:38.6px;text-align:center;color:#c81414;font-size:6.6px">0</div>
<div class="a" style="left:903.6px;top:76.0px;width:38.6px;height:13.0px;border:1px solid #4a4558;background:#161616;border-radius:1.5px;"></div>
<div class="a" style="left:903.6px;top:76.0px;width:38.6px;height:13.0px;display:flex;align-items:center;justify-content:center;text-align:center;color:#e6e6e6;font-size:6.2px;white-space:nowrap"><svg width="9" height="9" style="position:static"><path d="M4.5 1L1 4.3h1.2V8h4.6V4.3H8z" fill="none" stroke="#e6e6e6" stroke-width=".9" stroke-linejoin="round"/><path d="M3.3 6h2.4M3.3 7.3h2.4" stroke="#e6e6e6" stroke-width=".6"/></svg></div>
<div class="a" style="left:903.6px;top:90.0px;width:38.6px;height:12.7px;border:1px solid #4a4558;background:#161616;border-radius:1.5px;"></div>
<div class="a" style="left:903.6px;top:90.0px;width:38.6px;height:12.7px;display:flex;align-items:center;justify-content:center;text-align:center;color:#e6e6e6;font-size:6.2px;white-space:nowrap">Max</div>
<div class="a" style="left:908.7px;top:104px;width:28.5px;height:84px;background:linear-gradient(180deg,#202020 0%,#2a2a2a 15%,#383838 40%,#424242 50%,#383838 62%,#2a2a2a 85%,#1e1e1e 100%)"></div>
<div class="a" style="left:908.7px;top:104px;width:28.5px;height:.8px;background:#181818"></div>
<div class="a" style="left:908.7px;top:107px;width:28.5px;height:.8px;background:#181818"></div>
<div class="a" style="left:908.7px;top:111px;width:28.5px;height:.8px;background:#181818"></div>
<div class="a" style="left:908.7px;top:115px;width:28.5px;height:.8px;background:#181818"></div>
<div class="a" style="left:908.7px;top:121px;width:28.5px;height:.8px;background:#181818"></div>
<div class="a" style="left:908.7px;top:127px;width:28.5px;height:.8px;background:#181818"></div>
<div class="a" style="left:908.7px;top:133px;width:28.5px;height:.8px;background:#181818"></div>
<div class="a" style="left:908.7px;top:139px;width:28.5px;height:.8px;background:#181818"></div>
<div class="a" style="left:908.7px;top:144px;width:28.5px;height:.8px;background:#181818"></div>
<div class="a" style="left:908.7px;top:151px;width:28.5px;height:.8px;background:#181818"></div>
<div class="a" style="left:908.7px;top:157px;width:28.5px;height:.8px;background:#181818"></div>
<div class="a" style="left:908.7px;top:163px;width:28.5px;height:.8px;background:#181818"></div>
<div class="a" style="left:908.7px;top:169px;width:28.5px;height:.8px;background:#181818"></div>
<div class="a" style="left:908.7px;top:175px;width:28.5px;height:.8px;background:#181818"></div>
<div class="a" style="left:908.7px;top:180px;width:28.5px;height:.8px;background:#181818"></div>
<div class="a" style="left:908.7px;top:184px;width:28.5px;height:.8px;background:#181818"></div>
<div class="a" style="left:908.7px;top:187px;width:28.5px;height:.8px;background:#181818"></div>
<div class="a" style="left:907.4px;top:144.3px;width:31px;height:4px;border:.9px solid #a8a8a8;border-radius:1.5px;background:#3a3a3a"></div>
<div class="a" style="left:903.6px;top:190.0px;width:38.6px;height:12.0px;border:1px solid #4a4558;background:#161616;border-radius:1.5px;"></div>
<div class="a" style="left:903.6px;top:190.0px;width:38.6px;height:12.0px;display:flex;align-items:center;justify-content:center;text-align:center;color:#e6e6e6;font-size:6.2px;white-space:nowrap">Min</div>
<div class="a" style="left:946.1px;top:61px;width:40.9px;height:143px;background:#131313"></div>
<div class="a" style="left:946.6px;top:48.9px;width:38.4px;height:12.1px;border:1px solid #4a4558;background:#161616;border-radius:1.5px;"></div>
<div class="a" style="left:946.6px;top:48.9px;width:38.4px;height:12.1px;display:flex;align-items:center;justify-content:center;text-align:center;color:#e6e6e6;font-size:6.1px;white-space:nowrap">Coordinate Y</div>
<div class="a" style="left:946.6px;top:65px;width:38.4px;text-align:center;color:#c81414;font-size:6.6px">1</div>
<div class="a" style="left:946.6px;top:76.0px;width:38.4px;height:13.0px;border:1px solid #4a4558;background:#161616;border-radius:1.5px;"></div>
<div class="a" style="left:946.6px;top:76.0px;width:38.4px;height:13.0px;display:flex;align-items:center;justify-content:center;text-align:center;color:#e6e6e6;font-size:6.2px;white-space:nowrap"><svg width="9" height="9" style="position:static"><path d="M4.5 1L1 4.3h1.2V8h4.6V4.3H8z" fill="none" stroke="#e6e6e6" stroke-width=".9" stroke-linejoin="round"/><path d="M3.3 6h2.4M3.3 7.3h2.4" stroke="#e6e6e6" stroke-width=".6"/></svg></div>
<div class="a" style="left:946.6px;top:90.0px;width:38.4px;height:12.7px;border:1px solid #4a4558;background:#161616;border-radius:1.5px;"></div>
<div class="a" style="left:946.6px;top:90.0px;width:38.4px;height:12.7px;display:flex;align-items:center;justify-content:center;text-align:center;color:#e6e6e6;font-size:6.2px;white-space:nowrap">Max</div>
<div class="a" style="left:951.5px;top:104px;width:28.5px;height:84px;background:linear-gradient(180deg,#202020 0%,#2a2a2a 15%,#383838 40%,#424242 50%,#383838 62%,#2a2a2a 85%,#1e1e1e 100%)"></div>
<div class="a" style="left:951.5px;top:104px;width:28.5px;height:.8px;background:#181818"></div>
<div class="a" style="left:951.5px;top:107px;width:28.5px;height:.8px;background:#181818"></div>
<div class="a" style="left:951.5px;top:111px;width:28.5px;height:.8px;background:#181818"></div>
<div class="a" style="left:951.5px;top:115px;width:28.5px;height:.8px;background:#181818"></div>
<div class="a" style="left:951.5px;top:121px;width:28.5px;height:.8px;background:#181818"></div>
<div class="a" style="left:951.5px;top:127px;width:28.5px;height:.8px;background:#181818"></div>
<div class="a" style="left:951.5px;top:133px;width:28.5px;height:.8px;background:#181818"></div>
<div class="a" style="left:951.5px;top:139px;width:28.5px;height:.8px;background:#181818"></div>
<div class="a" style="left:951.5px;top:144px;width:28.5px;height:.8px;background:#181818"></div>
<div class="a" style="left:951.5px;top:151px;width:28.5px;height:.8px;background:#181818"></div>
<div class="a" style="left:951.5px;top:157px;width:28.5px;height:.8px;background:#181818"></div>
<div class="a" style="left:951.5px;top:163px;width:28.5px;height:.8px;background:#181818"></div>
<div class="a" style="left:951.5px;top:169px;width:28.5px;height:.8px;background:#181818"></div>
<div class="a" style="left:951.5px;top:175px;width:28.5px;height:.8px;background:#181818"></div>
<div class="a" style="left:951.5px;top:180px;width:28.5px;height:.8px;background:#181818"></div>
<div class="a" style="left:951.5px;top:184px;width:28.5px;height:.8px;background:#181818"></div>
<div class="a" style="left:951.5px;top:187px;width:28.5px;height:.8px;background:#181818"></div>
<div class="a" style="left:950.3px;top:144.3px;width:31px;height:4px;border:.9px solid #a8a8a8;border-radius:1.5px;background:#3a3a3a"></div>
<div class="a" style="left:946.6px;top:190.0px;width:38.4px;height:12.0px;border:1px solid #4a4558;background:#161616;border-radius:1.5px;"></div>
<div class="a" style="left:946.6px;top:190.0px;width:38.4px;height:12.0px;display:flex;align-items:center;justify-content:center;text-align:center;color:#e6e6e6;font-size:6.2px;white-space:nowrap">Min</div>
<div class="a" style="left:988.5px;top:61px;width:41.0px;height:143px;background:#131313"></div>
<div class="a" style="left:989.0px;top:48.9px;width:38.5px;height:12.1px;border:1px solid #4a4558;background:#161616;border-radius:1.5px;"></div>
<div class="a" style="left:989.0px;top:48.9px;width:38.5px;height:12.1px;display:flex;align-items:center;justify-content:center;text-align:center;color:#e6e6e6;font-size:6.1px;white-space:nowrap">Coordinate Z</div>
<div class="a" style="left:989.0px;top:65px;width:38.5px;text-align:center;color:#c81414;font-size:6.6px">0</div>
<div class="a" style="left:989.0px;top:76.0px;width:38.5px;height:13.0px;border:1px solid #4a4558;background:#161616;border-radius:1.5px;"></div>
<div class="a" style="left:989.0px;top:76.0px;width:38.5px;height:13.0px;display:flex;align-items:center;justify-content:center;text-align:center;color:#e6e6e6;font-size:6.2px;white-space:nowrap"><svg width="9" height="9" style="position:static"><path d="M4.5 1L1 4.3h1.2V8h4.6V4.3H8z" fill="none" stroke="#e6e6e6" stroke-width=".9" stroke-linejoin="round"/><path d="M3.3 6h2.4M3.3 7.3h2.4" stroke="#e6e6e6" stroke-width=".6"/></svg></div>
<div class="a" style="left:989.0px;top:90.0px;width:38.5px;height:12.7px;border:1px solid #4a4558;background:#161616;border-radius:1.5px;"></div>
<div class="a" style="left:989.0px;top:90.0px;width:38.5px;height:12.7px;display:flex;align-items:center;justify-content:center;text-align:center;color:#e6e6e6;font-size:6.2px;white-space:nowrap">Max</div>
<div class="a" style="left:994.0px;top:104px;width:28.5px;height:84px;background:linear-gradient(180deg,#202020 0%,#2a2a2a 15%,#383838 40%,#424242 50%,#383838 62%,#2a2a2a 85%,#1e1e1e 100%)"></div>
<div class="a" style="left:994.0px;top:104px;width:28.5px;height:.8px;background:#181818"></div>
<div class="a" style="left:994.0px;top:107px;width:28.5px;height:.8px;background:#181818"></div>
<div class="a" style="left:994.0px;top:111px;width:28.5px;height:.8px;background:#181818"></div>
<div class="a" style="left:994.0px;top:115px;width:28.5px;height:.8px;background:#181818"></div>
<div class="a" style="left:994.0px;top:121px;width:28.5px;height:.8px;background:#181818"></div>
<div class="a" style="left:994.0px;top:127px;width:28.5px;height:.8px;background:#181818"></div>
<div class="a" style="left:994.0px;top:133px;width:28.5px;height:.8px;background:#181818"></div>
<div class="a" style="left:994.0px;top:139px;width:28.5px;height:.8px;background:#181818"></div>
<div class="a" style="left:994.0px;top:144px;width:28.5px;height:.8px;background:#181818"></div>
<div class="a" style="left:994.0px;top:151px;width:28.5px;height:.8px;background:#181818"></div>
<div class="a" style="left:994.0px;top:157px;width:28.5px;height:.8px;background:#181818"></div>
<div class="a" style="left:994.0px;top:163px;width:28.5px;height:.8px;background:#181818"></div>
<div class="a" style="left:994.0px;top:169px;width:28.5px;height:.8px;background:#181818"></div>
<div class="a" style="left:994.0px;top:175px;width:28.5px;height:.8px;background:#181818"></div>
<div class="a" style="left:994.0px;top:180px;width:28.5px;height:.8px;background:#181818"></div>
<div class="a" style="left:994.0px;top:184px;width:28.5px;height:.8px;background:#181818"></div>
<div class="a" style="left:994.0px;top:187px;width:28.5px;height:.8px;background:#181818"></div>
<div class="a" style="left:992.8px;top:144.3px;width:31px;height:4px;border:.9px solid #a8a8a8;border-radius:1.5px;background:#3a3a3a"></div>
<div class="a" style="left:989.0px;top:190.0px;width:38.5px;height:12.0px;border:1px solid #4a4558;background:#161616;border-radius:1.5px;"></div>
<div class="a" style="left:989.0px;top:190.0px;width:38.5px;height:12.0px;display:flex;align-items:center;justify-content:center;text-align:center;color:#e6e6e6;font-size:6.2px;white-space:nowrap">Min</div>
<div class="a" style="left:1065.5px;top:61px;width:48.0px;height:143px;background:#131313"></div>
<div class="a" style="left:1066.0px;top:48.9px;width:45.5px;height:12.1px;border:1px solid #4a4558;background:#161616;border-radius:1.5px;"></div>
<div class="a" style="left:1066.0px;top:48.9px;width:45.5px;height:12.1px;display:flex;align-items:center;justify-content:center;text-align:center;color:#e6e6e6;font-size:6.0px;white-space:nowrap">Generic Control</div>
<div class="a" style="left:1066.0px;top:65px;width:45.5px;text-align:center;color:#3e3a50;font-size:6.6px">0</div>
<div class="a" style="left:1066.0px;top:76.0px;width:45.5px;height:13.0px;border:1px solid #4a4558;background:#161616;border-radius:1.5px;"></div>
<div class="a" style="left:1066.0px;top:76.0px;width:45.5px;height:13.0px;display:flex;align-items:center;justify-content:center;text-align:center;color:#e6e6e6;font-size:6.2px;white-space:nowrap"><svg width="9" height="9" style="position:static"><path d="M4.5 1L1 4.3h1.2V8h4.6V4.3H8z" fill="none" stroke="#e6e6e6" stroke-width=".9" stroke-linejoin="round"/><path d="M3.3 6h2.4M3.3 7.3h2.4" stroke="#e6e6e6" stroke-width=".6"/></svg></div>
<div class="a" style="left:1066.0px;top:90.0px;width:45.5px;height:12.7px;border:1px solid #4a4558;background:#161616;border-radius:1.5px;"></div>
<div class="a" style="left:1066.0px;top:90.0px;width:45.5px;height:12.7px;display:flex;align-items:center;justify-content:center;text-align:center;color:#e6e6e6;font-size:6.2px;white-space:nowrap">Max</div>
<div class="a" style="left:1074.5px;top:104px;width:28.5px;height:84px;background:linear-gradient(180deg,#202020 0%,#2a2a2a 15%,#383838 40%,#424242 50%,#383838 62%,#2a2a2a 85%,#1e1e1e 100%)"></div>
<div class="a" style="left:1074.5px;top:104px;width:28.5px;height:.8px;background:#181818"></div>
<div class="a" style="left:1074.5px;top:107px;width:28.5px;height:.8px;background:#181818"></div>
<div class="a" style="left:1074.5px;top:111px;width:28.5px;height:.8px;background:#181818"></div>
<div class="a" style="left:1074.5px;top:115px;width:28.5px;height:.8px;background:#181818"></div>
<div class="a" style="left:1074.5px;top:121px;width:28.5px;height:.8px;background:#181818"></div>
<div class="a" style="left:1074.5px;top:127px;width:28.5px;height:.8px;background:#181818"></div>
<div class="a" style="left:1074.5px;top:133px;width:28.5px;height:.8px;background:#181818"></div>
<div class="a" style="left:1074.5px;top:139px;width:28.5px;height:.8px;background:#181818"></div>
<div class="a" style="left:1074.5px;top:144px;width:28.5px;height:.8px;background:#181818"></div>
<div class="a" style="left:1074.5px;top:151px;width:28.5px;height:.8px;background:#181818"></div>
<div class="a" style="left:1074.5px;top:157px;width:28.5px;height:.8px;background:#181818"></div>
<div class="a" style="left:1074.5px;top:163px;width:28.5px;height:.8px;background:#181818"></div>
<div class="a" style="left:1074.5px;top:169px;width:28.5px;height:.8px;background:#181818"></div>
<div class="a" style="left:1074.5px;top:175px;width:28.5px;height:.8px;background:#181818"></div>
<div class="a" style="left:1074.5px;top:180px;width:28.5px;height:.8px;background:#181818"></div>
<div class="a" style="left:1074.5px;top:184px;width:28.5px;height:.8px;background:#181818"></div>
<div class="a" style="left:1074.5px;top:187px;width:28.5px;height:.8px;background:#181818"></div>
<div class="a" style="left:1073.2px;top:144.3px;width:31px;height:4px;border:.9px solid #a8a8a8;border-radius:1.5px;background:#3a3a3a"></div>
<div class="a" style="left:1066.0px;top:190.0px;width:45.5px;height:12.0px;border:1px solid #4a4558;background:#161616;border-radius:1.5px;"></div>
<div class="a" style="left:1066.0px;top:190.0px;width:45.5px;height:12.0px;display:flex;align-items:center;justify-content:center;text-align:center;color:#e6e6e6;font-size:6.2px;white-space:nowrap">Min</div>
<div class="a" style="left:1115.2px;top:61px;width:33.4px;height:143px;background:#131313"></div>
<div class="a" style="left:1115.7px;top:48.9px;width:30.9px;height:12.1px;border:1px solid #4a4558;background:#161616;border-radius:1.5px;"></div>
<div class="a" style="left:1115.7px;top:48.9px;width:30.9px;height:12.1px;display:flex;align-items:center;justify-content:center;text-align:center;color:#e6e6e6;font-size:6.1px;white-space:nowrap">X Scale</div>
<div class="a" style="left:1115.7px;top:65px;width:30.9px;text-align:center;color:#c81414;font-size:6.6px">77</div>
<div class="a" style="left:1115.7px;top:76.0px;width:30.9px;height:13.0px;border:1px solid #4a4558;background:#161616;border-radius:1.5px;"></div>
<div class="a" style="left:1115.7px;top:76.0px;width:30.9px;height:13.0px;display:flex;align-items:center;justify-content:center;text-align:center;color:#e6e6e6;font-size:6.2px;white-space:nowrap"><svg width="9" height="9" style="position:static"><path d="M4.5 1L1 4.3h1.2V8h4.6V4.3H8z" fill="none" stroke="#e6e6e6" stroke-width=".9" stroke-linejoin="round"/><path d="M3.3 6h2.4M3.3 7.3h2.4" stroke="#e6e6e6" stroke-width=".6"/></svg></div>
<div class="a" style="left:1115.7px;top:90.0px;width:30.9px;height:12.7px;border:1px solid #4a4558;background:#161616;border-radius:1.5px;"></div>
<div class="a" style="left:1115.7px;top:90.0px;width:30.9px;height:12.7px;display:flex;align-items:center;justify-content:center;text-align:center;color:#e6e6e6;font-size:6.2px;white-space:nowrap">Max</div>
<div class="a" style="left:1116.9px;top:104px;width:28.5px;height:84px;background:linear-gradient(180deg,#202020 0%,#2a2a2a 15%,#383838 40%,#424242 50%,#383838 62%,#2a2a2a 85%,#1e1e1e 100%)"></div>
<div class="a" style="left:1116.9px;top:104px;width:28.5px;height:.8px;background:#181818"></div>
<div class="a" style="left:1116.9px;top:107px;width:28.5px;height:.8px;background:#181818"></div>
<div class="a" style="left:1116.9px;top:111px;width:28.5px;height:.8px;background:#181818"></div>
<div class="a" style="left:1116.9px;top:115px;width:28.5px;height:.8px;background:#181818"></div>
<div class="a" style="left:1116.9px;top:121px;width:28.5px;height:.8px;background:#181818"></div>
<div class="a" style="left:1116.9px;top:127px;width:28.5px;height:.8px;background:#181818"></div>
<div class="a" style="left:1116.9px;top:133px;width:28.5px;height:.8px;background:#181818"></div>
<div class="a" style="left:1116.9px;top:139px;width:28.5px;height:.8px;background:#181818"></div>
<div class="a" style="left:1116.9px;top:144px;width:28.5px;height:.8px;background:#181818"></div>
<div class="a" style="left:1116.9px;top:151px;width:28.5px;height:.8px;background:#181818"></div>
<div class="a" style="left:1116.9px;top:157px;width:28.5px;height:.8px;background:#181818"></div>
<div class="a" style="left:1116.9px;top:163px;width:28.5px;height:.8px;background:#181818"></div>
<div class="a" style="left:1116.9px;top:169px;width:28.5px;height:.8px;background:#181818"></div>
<div class="a" style="left:1116.9px;top:175px;width:28.5px;height:.8px;background:#181818"></div>
<div class="a" style="left:1116.9px;top:180px;width:28.5px;height:.8px;background:#181818"></div>
<div class="a" style="left:1116.9px;top:184px;width:28.5px;height:.8px;background:#181818"></div>
<div class="a" style="left:1116.9px;top:187px;width:28.5px;height:.8px;background:#181818"></div>
<div class="a" style="left:1115.7px;top:144.3px;width:31px;height:4px;border:.9px solid #a8a8a8;border-radius:1.5px;background:#3a3a3a"></div>
<div class="a" style="left:1115.7px;top:190.0px;width:30.9px;height:12.0px;border:1px solid #4a4558;background:#161616;border-radius:1.5px;"></div>
<div class="a" style="left:1115.7px;top:190.0px;width:30.9px;height:12.0px;display:flex;align-items:center;justify-content:center;text-align:center;color:#e6e6e6;font-size:6.2px;white-space:nowrap">Min</div>
<div class="a" style="left:1150.3px;top:61px;width:33.7px;height:143px;background:#131313"></div>
<div class="a" style="left:1150.8px;top:48.9px;width:31.2px;height:12.1px;border:1px solid #4a4558;background:#161616;border-radius:1.5px;"></div>
<div class="a" style="left:1150.8px;top:48.9px;width:31.2px;height:12.1px;display:flex;align-items:center;justify-content:center;text-align:center;color:#e6e6e6;font-size:6.1px;white-space:nowrap">Y Scale</div>
<div class="a" style="left:1150.8px;top:65px;width:31.2px;text-align:center;color:#3e3a50;font-size:6.6px">0</div>
<div class="a" style="left:1150.8px;top:76.0px;width:31.2px;height:13.0px;border:1px solid #4a4558;background:#161616;border-radius:1.5px;"></div>
<div class="a" style="left:1150.8px;top:76.0px;width:31.2px;height:13.0px;display:flex;align-items:center;justify-content:center;text-align:center;color:#e6e6e6;font-size:6.2px;white-space:nowrap"><svg width="9" height="9" style="position:static"><path d="M4.5 1L1 4.3h1.2V8h4.6V4.3H8z" fill="none" stroke="#e6e6e6" stroke-width=".9" stroke-linejoin="round"/><path d="M3.3 6h2.4M3.3 7.3h2.4" stroke="#e6e6e6" stroke-width=".6"/></svg></div>
<div class="a" style="left:1150.8px;top:90.0px;width:31.2px;height:12.7px;border:1px solid #4a4558;background:#161616;border-radius:1.5px;"></div>
<div class="a" style="left:1150.8px;top:90.0px;width:31.2px;height:12.7px;display:flex;align-items:center;justify-content:center;text-align:center;color:#e6e6e6;font-size:6.2px;white-space:nowrap">Max</div>
<div class="a" style="left:1152.2px;top:104px;width:28.5px;height:84px;background:linear-gradient(180deg,#202020 0%,#2a2a2a 15%,#383838 40%,#424242 50%,#383838 62%,#2a2a2a 85%,#1e1e1e 100%)"></div>
<div class="a" style="left:1152.2px;top:104px;width:28.5px;height:.8px;background:#181818"></div>
<div class="a" style="left:1152.2px;top:107px;width:28.5px;height:.8px;background:#181818"></div>
<div class="a" style="left:1152.2px;top:111px;width:28.5px;height:.8px;background:#181818"></div>
<div class="a" style="left:1152.2px;top:115px;width:28.5px;height:.8px;background:#181818"></div>
<div class="a" style="left:1152.2px;top:121px;width:28.5px;height:.8px;background:#181818"></div>
<div class="a" style="left:1152.2px;top:127px;width:28.5px;height:.8px;background:#181818"></div>
<div class="a" style="left:1152.2px;top:133px;width:28.5px;height:.8px;background:#181818"></div>
<div class="a" style="left:1152.2px;top:139px;width:28.5px;height:.8px;background:#181818"></div>
<div class="a" style="left:1152.2px;top:144px;width:28.5px;height:.8px;background:#181818"></div>
<div class="a" style="left:1152.2px;top:151px;width:28.5px;height:.8px;background:#181818"></div>
<div class="a" style="left:1152.2px;top:157px;width:28.5px;height:.8px;background:#181818"></div>
<div class="a" style="left:1152.2px;top:163px;width:28.5px;height:.8px;background:#181818"></div>
<div class="a" style="left:1152.2px;top:169px;width:28.5px;height:.8px;background:#181818"></div>
<div class="a" style="left:1152.2px;top:175px;width:28.5px;height:.8px;background:#181818"></div>
<div class="a" style="left:1152.2px;top:180px;width:28.5px;height:.8px;background:#181818"></div>
<div class="a" style="left:1152.2px;top:184px;width:28.5px;height:.8px;background:#181818"></div>
<div class="a" style="left:1152.2px;top:187px;width:28.5px;height:.8px;background:#181818"></div>
<div class="a" style="left:1150.9px;top:144.3px;width:31px;height:4px;border:.9px solid #a8a8a8;border-radius:1.5px;background:#3a3a3a"></div>
<div class="a" style="left:1150.8px;top:190.0px;width:31.2px;height:12.0px;border:1px solid #4a4558;background:#161616;border-radius:1.5px;"></div>
<div class="a" style="left:1150.8px;top:190.0px;width:31.2px;height:12.0px;display:flex;align-items:center;justify-content:center;text-align:center;color:#e6e6e6;font-size:6.2px;white-space:nowrap">Min</div>
<div class="a" style="left:1185.5px;top:61px;width:33.3px;height:143px;background:#131313"></div>
<div class="a" style="left:1186.0px;top:48.9px;width:30.8px;height:12.1px;border:1px solid #4a4558;background:#161616;border-radius:1.5px;"></div>
<div class="a" style="left:1186.0px;top:48.9px;width:30.8px;height:12.1px;display:flex;align-items:center;justify-content:center;text-align:center;color:#e6e6e6;font-size:6.1px;white-space:nowrap">Z Scale</div>
<div class="a" style="left:1186.0px;top:65px;width:30.8px;text-align:center;color:#c81414;font-size:6.6px">0</div>
<div class="a" style="left:1186.0px;top:76.0px;width:30.8px;height:13.0px;border:1px solid #4a4558;background:#161616;border-radius:1.5px;"></div>
<div class="a" style="left:1186.0px;top:76.0px;width:30.8px;height:13.0px;display:flex;align-items:center;justify-content:center;text-align:center;color:#e6e6e6;font-size:6.2px;white-space:nowrap"><svg width="9" height="9" style="position:static"><path d="M4.5 1L1 4.3h1.2V8h4.6V4.3H8z" fill="none" stroke="#e6e6e6" stroke-width=".9" stroke-linejoin="round"/><path d="M3.3 6h2.4M3.3 7.3h2.4" stroke="#e6e6e6" stroke-width=".6"/></svg></div>
<div class="a" style="left:1186.0px;top:90.0px;width:30.8px;height:12.7px;border:1px solid #4a4558;background:#161616;border-radius:1.5px;"></div>
<div class="a" style="left:1186.0px;top:90.0px;width:30.8px;height:12.7px;display:flex;align-items:center;justify-content:center;text-align:center;color:#e6e6e6;font-size:6.2px;white-space:nowrap">Max</div>
<div class="a" style="left:1187.2px;top:104px;width:28.5px;height:84px;background:linear-gradient(180deg,#202020 0%,#2a2a2a 15%,#383838 40%,#424242 50%,#383838 62%,#2a2a2a 85%,#1e1e1e 100%)"></div>
<div class="a" style="left:1187.2px;top:104px;width:28.5px;height:.8px;background:#181818"></div>
<div class="a" style="left:1187.2px;top:107px;width:28.5px;height:.8px;background:#181818"></div>
<div class="a" style="left:1187.2px;top:111px;width:28.5px;height:.8px;background:#181818"></div>
<div class="a" style="left:1187.2px;top:115px;width:28.5px;height:.8px;background:#181818"></div>
<div class="a" style="left:1187.2px;top:121px;width:28.5px;height:.8px;background:#181818"></div>
<div class="a" style="left:1187.2px;top:127px;width:28.5px;height:.8px;background:#181818"></div>
<div class="a" style="left:1187.2px;top:133px;width:28.5px;height:.8px;background:#181818"></div>
<div class="a" style="left:1187.2px;top:139px;width:28.5px;height:.8px;background:#181818"></div>
<div class="a" style="left:1187.2px;top:144px;width:28.5px;height:.8px;background:#181818"></div>
<div class="a" style="left:1187.2px;top:151px;width:28.5px;height:.8px;background:#181818"></div>
<div class="a" style="left:1187.2px;top:157px;width:28.5px;height:.8px;background:#181818"></div>
<div class="a" style="left:1187.2px;top:163px;width:28.5px;height:.8px;background:#181818"></div>
<div class="a" style="left:1187.2px;top:169px;width:28.5px;height:.8px;background:#181818"></div>
<div class="a" style="left:1187.2px;top:175px;width:28.5px;height:.8px;background:#181818"></div>
<div class="a" style="left:1187.2px;top:180px;width:28.5px;height:.8px;background:#181818"></div>
<div class="a" style="left:1187.2px;top:184px;width:28.5px;height:.8px;background:#181818"></div>
<div class="a" style="left:1187.2px;top:187px;width:28.5px;height:.8px;background:#181818"></div>
<div class="a" style="left:1185.9px;top:144.3px;width:31px;height:4px;border:.9px solid #a8a8a8;border-radius:1.5px;background:#3a3a3a"></div>
<div class="a" style="left:1186.0px;top:190.0px;width:30.8px;height:12.0px;border:1px solid #4a4558;background:#161616;border-radius:1.5px;"></div>
<div class="a" style="left:1186.0px;top:190.0px;width:30.8px;height:12.0px;display:flex;align-items:center;justify-content:center;text-align:center;color:#e6e6e6;font-size:6.2px;white-space:nowrap">Min</div>
<div class="a" style="left:1220.5px;top:61px;width:40.2px;height:143px;background:#131313"></div>
<div class="a" style="left:1221.0px;top:48.9px;width:37.7px;height:12.1px;border:1px solid #4a4558;background:#161616;border-radius:1.5px;"></div>
<div class="a" style="left:1221.0px;top:48.9px;width:37.7px;height:12.1px;display:flex;align-items:center;justify-content:center;text-align:center;color:#e6e6e6;font-size:6.1px;white-space:nowrap">Rotate Mode</div>
<div class="a" style="left:1221.0px;top:65px;width:37.7px;text-align:center;color:#3e3a50;font-size:6.6px">0</div>
<div class="a" style="left:1221.0px;top:76.0px;width:37.7px;height:13.0px;border:1px solid #4a4558;background:#161616;border-radius:1.5px;"></div>
<div class="a" style="left:1221.0px;top:76.0px;width:37.7px;height:13.0px;display:flex;align-items:center;justify-content:center;text-align:center;color:#e6e6e6;font-size:6.2px;white-space:nowrap"><svg width="9" height="9" style="position:static"><path d="M4.5 1L1 4.3h1.2V8h4.6V4.3H8z" fill="none" stroke="#e6e6e6" stroke-width=".9" stroke-linejoin="round"/><path d="M3.3 6h2.4M3.3 7.3h2.4" stroke="#e6e6e6" stroke-width=".6"/></svg></div>
<div class="a" style="left:1221.0px;top:90.0px;width:37.7px;height:12.7px;border:1px solid #4a4558;background:#161616;border-radius:1.5px;"></div>
<div class="a" style="left:1221.0px;top:90.0px;width:37.7px;height:12.7px;display:flex;align-items:center;justify-content:center;text-align:center;color:#e6e6e6;font-size:6.2px;white-space:nowrap">Max</div>
<div class="a" style="left:1225.6px;top:104px;width:28.5px;height:84px;background:linear-gradient(180deg,#202020 0%,#2a2a2a 15%,#383838 40%,#424242 50%,#383838 62%,#2a2a2a 85%,#1e1e1e 100%)"></div>
<div class="a" style="left:1225.6px;top:104px;width:28.5px;height:.8px;background:#181818"></div>
<div class="a" style="left:1225.6px;top:107px;width:28.5px;height:.8px;background:#181818"></div>
<div class="a" style="left:1225.6px;top:111px;width:28.5px;height:.8px;background:#181818"></div>
<div class="a" style="left:1225.6px;top:115px;width:28.5px;height:.8px;background:#181818"></div>
<div class="a" style="left:1225.6px;top:121px;width:28.5px;height:.8px;background:#181818"></div>
<div class="a" style="left:1225.6px;top:127px;width:28.5px;height:.8px;background:#181818"></div>
<div class="a" style="left:1225.6px;top:133px;width:28.5px;height:.8px;background:#181818"></div>
<div class="a" style="left:1225.6px;top:139px;width:28.5px;height:.8px;background:#181818"></div>
<div class="a" style="left:1225.6px;top:144px;width:28.5px;height:.8px;background:#181818"></div>
<div class="a" style="left:1225.6px;top:151px;width:28.5px;height:.8px;background:#181818"></div>
<div class="a" style="left:1225.6px;top:157px;width:28.5px;height:.8px;background:#181818"></div>
<div class="a" style="left:1225.6px;top:163px;width:28.5px;height:.8px;background:#181818"></div>
<div class="a" style="left:1225.6px;top:169px;width:28.5px;height:.8px;background:#181818"></div>
<div class="a" style="left:1225.6px;top:175px;width:28.5px;height:.8px;background:#181818"></div>
<div class="a" style="left:1225.6px;top:180px;width:28.5px;height:.8px;background:#181818"></div>
<div class="a" style="left:1225.6px;top:184px;width:28.5px;height:.8px;background:#181818"></div>
<div class="a" style="left:1225.6px;top:187px;width:28.5px;height:.8px;background:#181818"></div>
<div class="a" style="left:1224.3px;top:144.3px;width:31px;height:4px;border:.9px solid #a8a8a8;border-radius:1.5px;background:#3a3a3a"></div>
<div class="a" style="left:1221.0px;top:190.0px;width:37.7px;height:12.0px;border:1px solid #4a4558;background:#161616;border-radius:1.5px;"></div>
<div class="a" style="left:1221.0px;top:190.0px;width:37.7px;height:12.0px;display:flex;align-items:center;justify-content:center;text-align:center;color:#e6e6e6;font-size:6.2px;white-space:nowrap">Min</div>
<div class="a" style="left:833px;top:716.7px;width:112.7px;height:1px;background:#a8780e"></div>
<div class="a" style="left:999.5px;top:716.7px;width:428px;height:1px;background:#a8780e"></div>
<div class="a" style="left:833px;top:717.7px;width:594.5px;height:84.8px;background:#161616"></div>
<svg style="left:835px;top:720px" width="12" height="12"><path d="M6 .8l1.2 1.2 1.7-.3.5 1.6 1.6.6-.4 1.7 1.1 1.3-1.1 1.3.4 1.7-1.6.6-.5 1.6-1.7-.3L6 11.2 4.8 10l-1.7.3-.5-1.6-1.6-.6.4-1.7L.3 5.1 1.4 3.8 1 2.1l1.6-.6.5-1.6 1.7.3z" fill="#d89a10" transform="translate(6 6) scale(.85) translate(-6 -6)"/><circle cx="6" cy="6" r="2" fill="#161616"/></svg>
<svg style="left:848px;top:716px" width="160" height="20"><path d="M2.5 17V3h45l1.5 14" fill="none" stroke="#3a3848" stroke-width=".9"/><path d="M50 17V3h45l1.5 14" fill="none" stroke="#3a3848" stroke-width=".9"/><path d="M97.7 1v17.5h52l1.8-17.5" fill="none" stroke="#c08a10" stroke-width=".9"/></svg>
<div class="t" style="left:854.5px;top:723.2px;color:#7e7a8c;font-size:6.1px;font-weight:bold">1 Live Table</div>
<div class="t" style="left:902.5px;top:723.2px;color:#7e7a8c;font-size:6.1px;font-weight:bold">2 PSD List 1</div>
<div class="t" style="left:951px;top:723px;color:#d89a10;font-size:6.3px;font-weight:bold">5 ML Controls</div>
<div class="t" style="left:1004.5px;top:721px;color:#8a84a0;font-size:9px;font-weight:bold">+</div>
<div class="t" style="left:1080.6px;top:736.5px;color:#e6e6e6;font-size:6.46px">2025 Curtain Movement Example*</div>
<div class="t" style="left:1103px;top:744px;color:#8a8a8a;font-size:5.85px">2024-11-08 08:59:04</div>
<svg style="left:1368px;top:736px" width="50" height="12"><path d="M8 1.5L3 10h10z" fill="none" stroke="#d0d0d0" stroke-width=".9"/><rect x="37" y="5.5" width="6" height="5" rx=".8" fill="#a89cc0"/><path d="M41.5 5.5V3.5a1.8 1.8 0 013.6 0v1" fill="none" stroke="#a89cc0" stroke-width="1"/></svg>
<div class="a" style="left:833px;top:750.5px;width:594.5px;height:14px;border:1px solid #34323f;background:#161616"></div>
<div class="a" style="left:868.5px;top:750.5px;width:1px;height:14px;background:#34323f"></div>
<div class="a" style="left:1008px;top:750.5px;width:1px;height:14px;background:#34323f"></div>
<div class="a" style="left:1148px;top:750.5px;width:1px;height:14px;background:#34323f"></div>
<div class="a" style="left:1288px;top:750.5px;width:1px;height:14px;background:#34323f"></div>
<svg style="left:845px;top:752.5px" width="10" height="10"><path d="M5 1.3L1.3 8h7.4z" fill="none" stroke="#eee" stroke-width="1.1"/></svg>
<div class="a" style="left:834px;top:766.7px;width:542.6px;height:12px;border:1px solid #a8780e;background:#000"></div>
<div class="t" style="left:836.9px;top:769.4px;color:#d89a10;font-size:7.3px">LIVE: Cue&nbsp;&nbsp;1001 :&nbsp;&nbsp;<span style="color:#d8c8a0">Chan 1</span></div>
<svg style="left:925.5px;top:769.5px" width="7" height="7"><path d="M3.3.5l2.8 2.8-2.8 2.8L.5 3.3z" fill="#e0a010"/></svg>
<svg style="left:1366px;top:768.5px" width="8" height="8"><circle cx="3.3" cy="3.3" r="2.4" fill="none" stroke="#bbb" stroke-width=".8"/><path d="M5 5l2 2" stroke="#bbb" stroke-width=".9"/></svg>
<div class="a" style="left:1379px;top:766.9px;width:46.8px;height:12.5px;border:1px solid #8a6210;background:#0a0a0a"></div>
<div class="t" style="left:1382.5px;top:770px;color:#d89a10;font-size:5.9px">User 1 | Offline</div>
<div class="a" style="left:833.0px;top:781.7px;width:34.5px;height:20.3px;border:1px solid #4a4558;background:#161616;border-radius:1.5px;"></div>
<div class="a" style="left:869.3px;top:781.7px;width:34.3px;height:20.3px;border:1px solid #4a4558;background:#161616;border-radius:1.5px;"></div>
<div class="a" style="left:869.3px;top:781.7px;width:34.3px;height:20.3px;display:flex;align-items:center;justify-content:center;text-align:center;color:#e6e6e6;font-size:6.3px;white-space:nowrap">Intensity</div>
<div class="a" style="left:905.0px;top:781.7px;width:34.6px;height:20.3px;border:1px solid #4a4558;background:#161616;border-radius:1.5px;"></div>
<div class="a" style="left:905.0px;top:781.7px;width:34.6px;height:20.3px;display:flex;align-items:center;justify-content:center;text-align:center;color:#e6e6e6;font-size:6.3px;white-space:nowrap">Focus</div>
<div class="a" style="left:941.4px;top:781.7px;width:34.1px;height:20.3px;border:1px solid #4a4558;background:#161616;border-radius:1.5px;"></div>
<div class="a" style="left:941.4px;top:781.7px;width:34.1px;height:20.3px;display:flex;align-items:center;justify-content:center;text-align:center;color:#e6e6e6;font-size:6.3px;white-space:nowrap">Color</div>
<div class="a" style="left:977.6px;top:781.7px;width:34.1px;height:20.3px;border:1px solid #4a4558;background:#161616;border-radius:1.5px;"></div>
<div class="a" style="left:977.6px;top:781.7px;width:34.1px;height:20.3px;display:flex;align-items:center;justify-content:center;text-align:center;color:#e6e6e6;font-size:6.3px;white-space:nowrap">Form</div>
<div class="a" style="left:1013.7px;top:781.7px;width:34.3px;height:20.3px;border:1px solid #4a4558;background:#161616;border-radius:1.5px;"></div>
<div class="a" style="left:1013.7px;top:781.7px;width:34.3px;height:20.3px;display:flex;align-items:center;justify-content:center;text-align:center;color:#e6e6e6;font-size:6.3px;white-space:nowrap">Image</div>
<div class="a" style="left:1050.0px;top:781.7px;width:34.3px;height:20.3px;border:1px solid #4a4558;background:#161616;border-radius:1.5px;"></div>
<div class="a" style="left:1050.0px;top:781.7px;width:34.3px;height:20.3px;display:flex;align-items:center;justify-content:center;text-align:center;color:#e6e6e6;font-size:6.3px;white-space:nowrap">Shutter</div>
<div class="a" style="left:1100.8px;top:781px;width:58.7px;height:21px;border:1px solid #0e5a1e;background:#000"></div>
<div class="a" style="left:1102.3px;top:782px;width:1.4px;height:19px;background:#1a9a3a"></div>
<div class="a" style="left:1106.5px;top:782px;width:1.4px;height:19px;background:#1a9a3a"></div>
<div class="t" style="left:1146px;top:782.8px;color:#8a8a8a;font-size:6px">CL 1</div>
<div class="a" style="left:1135px;top:795px;width:23px;height:6px;background:#3a3a3a;border-radius:1px"></div>
<div class="t" style="left:1139px;top:795.3px;color:#8a8a8a;font-size:5.8px">1001</div>
<div class="a" style="left:1176.0px;top:782.7px;width:33.8px;height:18.3px;border:1px solid #4a4558;background:#161616;border-radius:1.5px;"></div>
<div class="a" style="left:1176px;width:33.8px;top:784.3px;text-align:center;color:#8a8a9a;font-size:5.9px;white-space:nowrap">Query</div>
<div class="a" style="left:1176px;width:33.8px;top:791.8px;text-align:center;color:#e6e6e6;font-size:6.1px;white-space:nowrap">Make Man</div>
<div class="t" style="left:1206.3px;top:796.5px;color:#8a8a9a;font-size:4px">1</div>
<div class="a" style="left:1212.0px;top:782.7px;width:34.0px;height:18.3px;border:1px solid #4a4558;background:#161616;border-radius:1.5px;"></div>
<div class="a" style="left:1212px;width:34.0px;top:784.3px;text-align:center;color:#8a8a9a;font-size:5.9px;white-space:nowrap">Fan</div>
<div class="a" style="left:1212px;width:34.0px;top:791.8px;text-align:center;color:#e6e6e6;font-size:6.1px;white-space:nowrap">Make Abs</div>
<div class="t" style="left:1242.5px;top:796.5px;color:#8a8a9a;font-size:4px">2</div>
<div class="a" style="left:1248.0px;top:782.7px;width:34.4px;height:18.3px;border:1px solid #4a4558;background:#161616;border-radius:1.5px;"></div>
<div class="a" style="left:1248px;width:34.4px;top:784.3px;text-align:center;color:#8a8a9a;font-size:5.9px;white-space:nowrap">Assert</div>
<div class="a" style="left:1248px;width:34.4px;top:791.8px;text-align:center;color:#e6e6e6;font-size:6.1px;white-space:nowrap">Flash</div>
<div class="t" style="left:1278.9px;top:796.5px;color:#8a8a9a;font-size:4px">3</div>
<div class="a" style="left:1284.0px;top:782.7px;width:34.4px;height:18.3px;border:1px solid #4a4558;background:#161616;border-radius:1.5px;"></div>
<div class="a" style="left:1284px;width:34.4px;top:784.3px;text-align:center;color:#8a8a9a;font-size:5.9px;white-space:nowrap">Highlight</div>
<div class="a" style="left:1284px;width:34.4px;top:791.8px;text-align:center;color:#e6e6e6;font-size:6.1px;white-space:nowrap">Cell</div>
<div class="t" style="left:1314.9px;top:796.5px;color:#8a8a9a;font-size:4px">4</div>
<div class="a" style="left:1320.0px;top:782.7px;width:34.0px;height:18.3px;border:1px solid #4a4558;background:#161616;border-radius:1.5px;"></div>
<div class="a" style="left:1320px;width:34.0px;top:784.3px;text-align:center;color:#8a8a9a;font-size:5.9px;white-space:nowrap">Color Path</div>
<div class="a" style="left:1320px;width:34.0px;top:791.8px;text-align:center;color:#e6e6e6;font-size:6.1px;white-space:nowrap">Offset</div>
<div class="t" style="left:1350.5px;top:796.5px;color:#8a8a9a;font-size:4px">5</div>
<div class="a" style="left:1356.0px;top:782.7px;width:34.0px;height:18.3px;border:1px solid #4a4558;background:#161616;border-radius:1.5px;"></div>
<div class="a" style="left:1356px;width:34.0px;top:784.3px;text-align:center;color:#8a8a9a;font-size:5.9px;white-space:nowrap">Make Null</div>
<div class="a" style="left:1356px;width:34.0px;top:791.8px;text-align:center;color:#e6e6e6;font-size:6.1px;white-space:nowrap">Mark</div>
<div class="t" style="left:1386.5px;top:796.5px;color:#8a8a9a;font-size:4px">6</div>
<div class="a" style="left:1393.0px;top:782.7px;width:34.0px;height:18.3px;border:1px solid #4a4558;background:#161616;border-radius:1.5px;"></div>
<div class="a" style="left:1407.5px;top:784.7px;width:3.6px;height:3.6px;border-radius:50%;background:#3ad03a"></div>
<div class="a" style="left:1393px;width:34px;top:791.8px;text-align:center;color:#e6e6e6;font-size:6.1px">More SK</div>
</div>
</body></html>
